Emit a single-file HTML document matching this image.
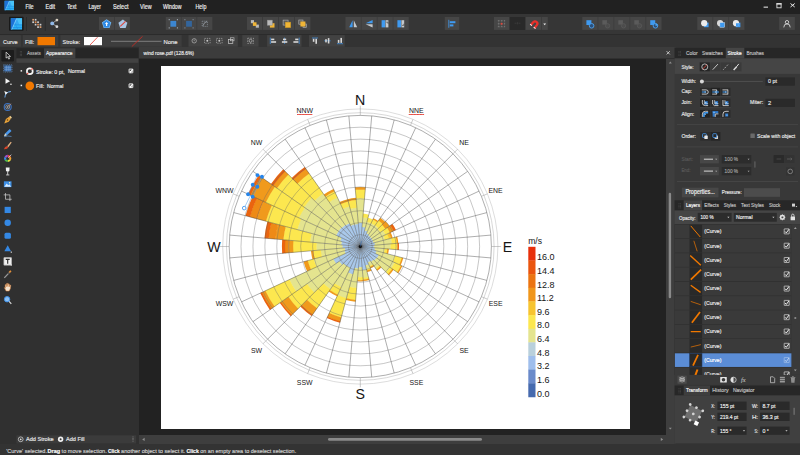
<!DOCTYPE html>
<html lang="en"><head><meta charset="utf-8">
<title>wind rose.pdf - Affinity Designer</title>
<style>
*{box-sizing:border-box;margin:0;padding:0}
html,body{width:800px;height:455px;overflow:hidden;background:#2f2f2f}
body{position:relative;font-family:"Liberation Sans",Arial,sans-serif;color:#d8d8d8;font-size:6.6px;line-height:1}
.a{position:absolute}
.t{position:absolute;white-space:nowrap;color:#dcdcdc}
svg.chart{position:absolute;left:0;top:0}
svg.ui{position:absolute;left:0;top:0;pointer-events:none}
</style></head><body>
<div class="a" style="left:0px;top:0px;width:800px;height:13.7px;background:#212121;"></div>
<div class="a" style="left:0px;top:13.7px;width:800px;height:20.3px;background:#363636;"></div>
<div class="a" style="left:0px;top:33.5px;width:800px;height:14.7px;background:#2b2b2b;"></div>
<div class="a" style="left:0px;top:34.8px;width:800px;height:12.3px;background:#333333;"></div>
<div class="a" style="left:0px;top:47.3px;width:800px;height:396.5px;background:#303030;"></div>
<div class="a" style="left:0px;top:443.7px;width:800px;height:11.3px;background:#333333;"></div>
<div class="a" style="left:138.5px;top:47.3px;width:537px;height:11.2px;background:#3c3c3c;"></div>
<div class="a" style="left:138.5px;top:58.5px;width:527.2px;height:377px;background:#222222;"></div>
<div class="a" style="left:161px;top:66px;width:469px;height:363px;background:#ffffff;"></div>
<div class="a" style="left:665.7px;top:58.5px;width:9.6px;height:377px;background:#3e3e3e;"></div>
<div class="a" style="left:138.5px;top:435.4px;width:537px;height:8.3px;background:#3e3e3e;"></div>
<svg class="chart" width="800" height="455" viewBox="0 0 800 455">
<g shape-rendering="geometricPrecision">
<path d="M360.30 246.50L358.19 222.59A24.00 24.00 0 0 1 362.41 222.59Z" fill="#a9c8ea"/>
<path d="M356.05 198.39A48.30 48.30 0 0 1 364.55 198.39L362.38 222.94A23.65 23.65 0 0 0 358.22 222.94Z" fill="#e4e48f"/>
<path d="M355.26 189.52A57.20 57.20 0 0 1 365.34 189.52L364.52 198.74A47.95 47.95 0 0 0 356.08 198.74Z" fill="#fce74f"/>
<path d="M355.07 187.33A59.40 59.40 0 0 1 365.53 187.33L365.30 189.87A56.85 56.85 0 0 0 355.30 189.87Z" fill="#f09a1c"/>
<path d="M360.30 246.50L362.03 226.57A20.00 20.00 0 0 1 365.49 227.19Z" fill="#a9c8ea"/>
<path d="M362.85 217.11A29.50 29.50 0 0 1 367.96 218.01L365.40 227.52A19.65 19.65 0 0 0 362.00 226.92Z" fill="#e4e48f"/>
<path d="M363.15 213.62A33.00 33.00 0 0 1 368.87 214.63L367.87 218.35A29.15 29.15 0 0 0 362.82 217.46Z" fill="#fce74f"/>
<path d="M360.30 246.50L364.69 230.08A17.00 17.00 0 0 1 367.50 231.10Z" fill="#a9c8ea"/>
<path d="M367.01 221.38A26.00 26.00 0 0 1 371.31 222.95L367.35 231.42A16.65 16.65 0 0 0 364.60 230.41Z" fill="#e4e48f"/>
<path d="M367.96 217.81A29.70 29.70 0 0 1 372.88 219.59L371.16 223.26A25.65 25.65 0 0 0 366.92 221.72Z" fill="#fce74f"/>
<path d="M360.30 246.50L366.63 232.90A15.00 15.00 0 0 1 368.91 234.22Z" fill="#a9c8ea"/>
<path d="M371.27 222.93A26.00 26.00 0 0 1 375.23 225.22L368.71 234.51A14.65 14.65 0 0 0 366.48 233.22Z" fill="#e4e48f"/>
<path d="M372.95 219.30A30.00 30.00 0 0 1 377.53 221.94L375.03 225.50A25.65 25.65 0 0 0 371.12 223.24Z" fill="#fce74f"/>
<path d="M373.46 218.21A31.20 31.20 0 0 1 378.22 220.96L377.33 222.23A29.65 29.65 0 0 0 372.81 219.62Z" fill="#f09a1c"/>
<path d="M360.30 246.50L368.32 235.02A14.00 14.00 0 0 1 370.21 236.61Z" fill="#a9c8ea"/>
<path d="M375.19 225.19A26.00 26.00 0 0 1 378.70 228.13L369.96 236.86A13.65 13.65 0 0 0 368.12 235.31Z" fill="#e4e48f"/>
<path d="M378.63 220.27A32.00 32.00 0 0 1 382.95 223.89L378.45 228.38A25.65 25.65 0 0 0 374.99 225.48Z" fill="#fce74f"/>
<path d="M380.35 217.81A35.00 35.00 0 0 1 385.07 221.77L382.70 224.14A31.65 31.65 0 0 0 378.43 220.56Z" fill="#f09a1c"/>
<path d="M360.30 246.50L370.19 236.59A14.00 14.00 0 0 1 371.78 238.48Z" fill="#a9c8ea"/>
<path d="M377.96 228.81A25.00 25.00 0 0 1 380.79 232.18L371.49 238.68A13.65 13.65 0 0 0 369.94 236.84Z" fill="#e4e48f"/>
<path d="M382.20 224.56A31.00 31.00 0 0 1 385.71 228.74L380.50 232.38A24.65 24.65 0 0 0 377.71 229.05Z" fill="#fce74f"/>
<path d="M385.45 221.31A35.60 35.60 0 0 1 389.48 226.11L385.42 228.94A30.65 30.65 0 0 0 381.95 224.81Z" fill="#f09a1c"/>
<path d="M360.30 246.50L371.76 238.46A14.00 14.00 0 0 1 372.99 240.59Z" fill="#a9c8ea"/>
<path d="M383.22 230.42A28.00 28.00 0 0 1 385.69 234.69L372.68 240.74A13.65 13.65 0 0 0 371.47 238.66Z" fill="#e4e48f"/>
<path d="M387.32 227.55A33.00 33.00 0 0 1 390.22 232.58L385.37 234.84A27.65 27.65 0 0 0 382.94 230.62Z" fill="#fce74f"/>
<path d="M390.59 225.25A37.00 37.00 0 0 1 393.85 230.89L389.90 232.73A32.65 32.65 0 0 0 387.03 227.75Z" fill="#f09a1c"/>
<path d="M392.47 223.93A39.30 39.30 0 0 1 395.93 229.92L393.53 231.04A36.65 36.65 0 0 0 390.30 225.45Z" fill="#ea640f"/>
<path d="M360.30 246.50L372.98 240.57A14.00 14.00 0 0 1 373.83 242.89Z" fill="#a9c8ea"/>
<path d="M383.85 235.49A26.00 26.00 0 0 1 385.42 239.79L373.49 242.98A13.65 13.65 0 0 0 372.67 240.72Z" fill="#e4e48f"/>
<path d="M387.48 233.80A30.00 30.00 0 0 1 389.28 238.76L385.08 239.88A25.65 25.65 0 0 0 383.54 235.64Z" fill="#fce74f"/>
<path d="M389.29 232.95A32.00 32.00 0 0 1 391.22 238.24L388.95 238.85A29.65 29.65 0 0 0 387.16 233.95Z" fill="#f7c42f"/>
<path d="M390.65 232.32A33.50 33.50 0 0 1 392.67 237.86L390.88 238.34A31.65 31.65 0 0 0 388.97 233.10Z" fill="#f09a1c"/>
<path d="M360.30 246.50L374.79 242.61A15.00 15.00 0 0 1 375.24 245.21Z" fill="#a9c8ea"/>
<path d="M391.20 238.19A32.00 32.00 0 0 1 392.18 243.74L374.90 245.24A14.65 14.65 0 0 0 374.45 242.70Z" fill="#e4e48f"/>
<path d="M396.03 236.89A37.00 37.00 0 0 1 397.16 243.31L391.83 243.77A31.65 31.65 0 0 0 390.86 238.28Z" fill="#fce74f"/>
<path d="M397.19 236.58A38.20 38.20 0 0 1 398.36 243.20L396.81 243.34A36.65 36.65 0 0 0 395.69 236.98Z" fill="#f09a1c"/>
<path d="M360.30 246.50L374.25 245.27A14.00 14.00 0 0 1 374.25 247.73Z" fill="#a9c8ea"/>
<path d="M390.78 243.81A30.60 30.60 0 0 1 390.78 249.19L373.90 247.70A13.65 13.65 0 0 0 373.90 245.30Z" fill="#e4e48f"/>
<path d="M397.65 243.20A37.50 37.50 0 0 1 397.65 249.80L390.43 249.16A30.25 30.25 0 0 0 390.43 243.84Z" fill="#fce74f"/>
<path d="M398.85 243.09A38.70 38.70 0 0 1 398.85 249.91L397.31 249.77A37.15 37.15 0 0 0 397.31 243.23Z" fill="#ea640f"/>
<path d="M360.30 246.50L375.24 247.79A15.00 15.00 0 0 1 374.79 250.39Z" fill="#a9c8ea"/>
<path d="M385.01 248.64A24.80 24.80 0 0 1 384.25 252.94L374.45 250.30A14.65 14.65 0 0 0 374.90 247.76Z" fill="#e4e48f"/>
<path d="M387.70 248.87A27.50 27.50 0 0 1 386.86 253.64L383.91 252.85A24.45 24.45 0 0 0 384.66 248.61Z" fill="#fce74f"/>
<path d="M388.89 248.98A28.70 28.70 0 0 1 388.02 253.95L386.52 253.55A27.15 27.15 0 0 0 387.35 248.84Z" fill="#f09a1c"/>
<path d="M360.30 246.50L376.72 250.89A17.00 17.00 0 0 1 375.70 253.70Z" fill="#a9c8ea"/>
<path d="M395.47 255.89A36.40 36.40 0 0 1 393.28 261.91L375.38 253.55A16.65 16.65 0 0 0 376.39 250.80Z" fill="#e4e48f"/>
<path d="M402.13 257.67A43.30 43.30 0 0 1 399.53 264.83L392.96 261.76A36.05 36.05 0 0 0 395.13 255.80Z" fill="#fce74f"/>
<path d="M403.29 257.98A44.50 44.50 0 0 1 400.61 265.34L399.21 264.69A42.95 42.95 0 0 0 401.80 257.58Z" fill="#f09a1c"/>
<path d="M360.30 246.50L379.07 255.23A20.70 20.70 0 0 1 377.25 258.39Z" fill="#a9c8ea"/>
<path d="M394.94 262.61A38.20 38.20 0 0 1 391.57 268.44L376.96 258.19A20.35 20.35 0 0 0 378.75 255.08Z" fill="#e4e48f"/>
<path d="M401.28 265.57A45.20 45.20 0 0 1 397.30 272.46L391.29 268.24A37.85 37.85 0 0 0 394.62 262.47Z" fill="#fce74f"/>
<path d="M402.37 266.07A46.40 46.40 0 0 1 398.29 273.15L397.02 272.26A44.85 44.85 0 0 0 400.96 265.42Z" fill="#f09a1c"/>
<path d="M360.30 246.50L376.69 257.96A20.00 20.00 0 0 1 374.43 260.65Z" fill="#a9c8ea"/>
<path d="M390.38 267.52A36.70 36.70 0 0 1 386.23 272.47L374.18 260.41A19.65 19.65 0 0 0 376.41 257.76Z" fill="#e4e48f"/>
<path d="M392.59 269.07A39.40 39.40 0 0 1 388.14 274.38L385.98 272.23A36.35 36.35 0 0 0 390.09 267.32Z" fill="#fce74f"/>
<path d="M393.58 269.76A40.60 40.60 0 0 1 388.98 275.23L387.89 274.14A39.05 39.05 0 0 0 392.31 268.87Z" fill="#f09a1c"/>
<path d="M360.30 246.50L373.75 259.92A19.00 19.00 0 0 1 371.18 262.07Z" fill="#a9c8ea"/>
<path d="M379.41 265.58A27.00 27.00 0 0 1 375.77 268.63L370.98 261.79A18.65 18.65 0 0 0 373.50 259.68Z" fill="#e4e48f"/>
<path d="M380.40 266.56A28.40 28.40 0 0 1 376.57 269.78L375.57 268.34A26.65 26.65 0 0 0 379.16 265.33Z" fill="#fce74f"/>
<path d="M381.25 267.41A29.60 29.60 0 0 1 377.26 270.76L376.37 269.49A28.05 28.05 0 0 0 380.15 266.32Z" fill="#f09a1c"/>
<path d="M360.30 246.50L370.64 261.24A18.00 18.00 0 0 1 367.89 262.82Z" fill="#a9c8ea"/>
<path d="M372.93 264.51A22.00 22.00 0 0 1 369.58 266.45L367.75 262.50A17.65 17.65 0 0 0 370.44 260.95Z" fill="#e4e48f"/>
<path d="M373.51 265.33A23.00 23.00 0 0 1 370.00 267.35L369.43 266.13A21.65 21.65 0 0 0 372.73 264.22Z" fill="#fce74f"/>
<path d="M374.08 266.15A24.00 24.00 0 0 1 370.42 268.26L369.85 267.04A22.65 22.65 0 0 0 373.31 265.04Z" fill="#f09a1c"/>
<path d="M360.30 246.50L368.77 264.62A20.00 20.00 0 0 1 365.46 265.82Z" fill="#a9c8ea"/>
<path d="M370.46 268.24A24.00 24.00 0 0 1 366.49 269.69L365.37 265.48A19.65 19.65 0 0 0 368.62 264.30Z" fill="#e4e48f"/>
<path d="M371.01 269.42A25.30 25.30 0 0 1 366.83 270.94L366.40 269.35A23.65 23.65 0 0 0 370.31 267.93Z" fill="#fce74f"/>
<path d="M371.52 270.51A26.50 26.50 0 0 1 367.14 272.10L366.74 270.61A24.95 24.95 0 0 0 370.86 269.10Z" fill="#f09a1c"/>
<path d="M360.30 246.50L366.53 269.68A24.00 24.00 0 0 1 362.37 270.41Z" fill="#a9c8ea"/>
<path d="M368.61 277.40A32.00 32.00 0 0 1 363.06 278.38L362.34 270.06A23.65 23.65 0 0 0 366.44 269.34Z" fill="#e4e48f"/>
<path d="M368.97 278.75A33.40 33.40 0 0 1 363.18 279.78L363.03 278.03A31.65 31.65 0 0 0 368.52 277.06Z" fill="#fce74f"/>
<path d="M369.28 279.91A34.60 34.60 0 0 1 363.29 280.97L363.15 279.43A33.05 33.05 0 0 0 368.88 278.42Z" fill="#f09a1c"/>
<path d="M360.30 246.50L362.15 267.42A21.00 21.00 0 0 1 358.45 267.42Z" fill="#a9c8ea"/>
<path d="M363.03 277.38A31.00 31.00 0 0 1 357.57 277.38L358.48 267.07A20.65 20.65 0 0 0 362.12 267.07Z" fill="#e4e48f"/>
<path d="M363.29 280.37A34.00 34.00 0 0 1 357.31 280.37L357.60 277.03A30.65 30.65 0 0 0 363.00 277.03Z" fill="#fce74f"/>
<path d="M363.38 281.36A35.00 35.00 0 0 1 357.22 281.36L357.34 280.02A33.65 33.65 0 0 0 363.26 280.02Z" fill="#f09a1c"/>
<path d="M360.30 246.50L358.37 268.82A22.40 22.40 0 0 1 354.48 268.13Z" fill="#a9c8ea"/>
<path d="M356.68 288.34A42.00 42.00 0 0 1 349.39 287.06L354.57 267.79A22.05 22.05 0 0 0 358.40 268.47Z" fill="#e4e48f"/>
<path d="M355.64 300.30A54.00 54.00 0 0 1 346.28 298.65L349.49 286.72A41.65 41.65 0 0 0 356.71 287.99Z" fill="#fce74f"/>
<path d="M355.51 301.79A55.50 55.50 0 0 1 345.89 300.10L346.37 298.31A53.65 53.65 0 0 0 355.67 299.95Z" fill="#f09a1c"/>
<path d="M360.30 246.50L352.82 274.52A29.00 29.00 0 0 1 348.02 272.77Z" fill="#a9c8ea"/>
<path d="M346.37 298.67A54.00 54.00 0 0 1 337.44 295.42L348.17 272.46A28.65 28.65 0 0 0 352.91 274.18Z" fill="#e4e48f"/>
<path d="M341.26 317.80A73.80 73.80 0 0 1 329.05 313.36L337.58 295.10A53.65 53.65 0 0 0 346.46 298.33Z" fill="#fce74f"/>
<path d="M340.23 321.67A77.80 77.80 0 0 1 327.36 316.98L329.20 313.04A73.45 73.45 0 0 0 341.35 317.46Z" fill="#f09a1c"/>
<path d="M339.95 322.73A78.90 78.90 0 0 1 326.89 317.98L327.51 316.66A77.45 77.45 0 0 0 340.32 321.33Z" fill="#ea640f"/>
<path d="M360.30 246.50L350.18 268.26A24.00 24.00 0 0 1 346.52 266.15Z" fill="#a9c8ea"/>
<path d="M341.19 287.57A45.30 45.30 0 0 1 334.28 283.58L346.72 265.86A23.65 23.65 0 0 0 350.32 267.94Z" fill="#e4e48f"/>
<path d="M337.73 295.01A53.50 53.50 0 0 1 329.58 290.30L334.49 283.30A44.95 44.95 0 0 0 341.34 287.26Z" fill="#fce74f"/>
<path d="M337.10 296.37A55.00 55.00 0 0 1 328.71 291.53L329.78 290.01A53.15 53.15 0 0 0 337.88 294.69Z" fill="#f09a1c"/>
<path d="M360.30 246.50L346.55 266.17A24.00 24.00 0 0 1 343.31 263.46Z" fill="#a9c8ea"/>
<path d="M330.22 289.53A52.50 52.50 0 0 1 323.14 283.59L343.56 263.21A23.65 23.65 0 0 0 346.75 265.88Z" fill="#e4e48f"/>
<path d="M316.88 308.63A75.80 75.80 0 0 1 306.65 300.05L323.39 283.34A52.15 52.15 0 0 0 330.43 289.24Z" fill="#fce74f"/>
<path d="M312.41 315.02A83.60 83.60 0 0 1 301.13 305.56L306.90 299.80A75.45 75.45 0 0 0 317.08 308.34Z" fill="#f09a1c"/>
<path d="M311.72 316.01A84.80 84.80 0 0 1 300.29 306.41L301.38 305.32A83.25 83.25 0 0 0 312.61 314.74Z" fill="#ea640f"/>
<path d="M360.30 246.50L341.93 264.90A26.00 26.00 0 0 1 338.99 261.39Z" fill="#a9c8ea"/>
<path d="M314.02 292.86A65.50 65.50 0 0 1 306.61 284.02L339.28 261.19A25.65 25.65 0 0 0 342.18 264.65Z" fill="#e4e48f"/>
<path d="M297.99 308.92A88.20 88.20 0 0 1 288.01 297.03L306.90 283.82A65.15 65.15 0 0 0 314.27 292.61Z" fill="#fce74f"/>
<path d="M291.63 315.29A97.20 97.20 0 0 1 280.63 302.18L288.29 296.83A87.85 87.85 0 0 0 298.23 308.67Z" fill="#f09a1c"/>
<path d="M290.78 316.14A98.40 98.40 0 0 1 279.65 302.87L280.92 301.98A96.85 96.85 0 0 0 291.88 315.04Z" fill="#ea640f"/>
<path d="M360.30 246.50L335.74 263.73A30.00 30.00 0 0 1 333.10 259.15Z" fill="#a9c8ea"/>
<path d="M296.04 291.58A78.50 78.50 0 0 1 289.13 279.61L333.42 259.01A29.65 29.65 0 0 0 336.03 263.53Z" fill="#e4e48f"/>
<path d="M274.34 306.80A105.00 105.00 0 0 1 265.10 290.79L289.44 279.47A78.15 78.15 0 0 0 296.32 291.38Z" fill="#fce74f"/>
<path d="M271.23 308.98A108.80 108.80 0 0 1 261.65 292.39L265.42 290.64A104.65 104.65 0 0 0 274.63 306.60Z" fill="#f09a1c"/>
<path d="M269.92 309.90A110.40 110.40 0 0 1 260.20 293.07L261.97 292.25A108.45 108.45 0 0 0 271.52 308.78Z" fill="#ea640f"/>
<path d="M360.30 246.50L345.26 253.53A16.60 16.60 0 0 1 344.26 250.78Z" fill="#a9c8ea"/>
<path d="M316.36 267.04A48.50 48.50 0 0 1 313.44 259.01L344.60 250.69A16.25 16.25 0 0 0 345.58 253.38Z" fill="#e4e48f"/>
<path d="M310.65 269.70A54.80 54.80 0 0 1 307.35 260.64L313.78 258.92A48.15 48.15 0 0 0 316.68 266.89Z" fill="#fce74f"/>
<path d="M307.12 271.35A58.70 58.70 0 0 1 303.59 261.64L307.69 260.55A54.45 54.45 0 0 0 310.97 269.55Z" fill="#f09a1c"/>
<path d="M360.30 246.50L344.95 250.63A15.90 15.90 0 0 1 344.46 247.87Z" fill="#a9c8ea"/>
<path d="M321.67 256.89A40.00 40.00 0 0 1 320.45 249.95L344.81 247.84A15.55 15.55 0 0 0 345.28 250.54Z" fill="#e4e48f"/>
<path d="M314.43 258.83A47.50 47.50 0 0 1 312.98 250.60L320.80 249.92A39.65 39.65 0 0 0 322.01 256.80Z" fill="#fce74f"/>
<path d="M312.50 259.35A49.50 49.50 0 0 1 310.98 250.77L313.33 250.57A47.15 47.15 0 0 0 314.77 258.74Z" fill="#f09a1c"/>
<path d="M360.30 246.50L342.17 248.10A18.20 18.20 0 0 1 342.17 244.90Z" fill="#a9c8ea"/>
<path d="M316.47 250.37A44.00 44.00 0 0 1 316.47 242.63L342.52 244.93A17.85 17.85 0 0 0 342.52 248.07Z" fill="#e4e48f"/>
<path d="M293.06 252.44A67.50 67.50 0 0 1 293.06 240.56L316.82 242.66A43.65 43.65 0 0 0 316.82 250.34Z" fill="#fce74f"/>
<path d="M288.58 252.84A72.00 72.00 0 0 1 288.58 240.16L293.41 240.59A67.15 67.15 0 0 0 293.41 252.41Z" fill="#f09a1c"/>
<path d="M284.99 253.15A75.60 75.60 0 0 1 284.99 239.85L288.93 240.19A71.65 71.65 0 0 0 288.93 252.81Z" fill="#ee8a16"/>
<path d="M282.20 253.40A78.40 78.40 0 0 1 282.20 239.60L285.34 239.88A75.25 75.25 0 0 0 285.34 253.12Z" fill="#ea640f"/>
<path d="M360.30 246.50L340.97 244.83A19.40 19.40 0 0 1 341.57 241.46Z" fill="#a9c8ea"/>
<path d="M309.89 242.13A50.60 50.60 0 0 1 311.44 233.36L341.90 241.55A19.05 19.05 0 0 0 341.32 244.86Z" fill="#e4e48f"/>
<path d="M283.09 239.81A77.50 77.50 0 0 1 285.46 226.38L311.77 233.45A50.25 50.25 0 0 0 310.24 242.16Z" fill="#fce74f"/>
<path d="M275.12 239.12A85.50 85.50 0 0 1 277.73 224.30L285.80 226.47A77.15 77.15 0 0 0 283.44 239.84Z" fill="#f09a1c"/>
<path d="M268.34 238.54A92.30 92.30 0 0 1 271.17 222.53L278.07 224.39A85.15 85.15 0 0 0 275.47 239.15Z" fill="#ee8a16"/>
<path d="M264.46 238.20A96.20 96.20 0 0 1 267.40 221.52L271.50 222.62A91.95 91.95 0 0 0 268.69 238.57Z" fill="#ea640f"/>
<path d="M360.30 246.50L340.01 241.08A21.00 21.00 0 0 1 341.28 237.61Z" fill="#a9c8ea"/>
<path d="M297.02 229.60A65.50 65.50 0 0 1 300.96 218.77L341.59 237.76A20.65 20.65 0 0 0 340.35 241.17Z" fill="#e4e48f"/>
<path d="M265.62 221.22A98.00 98.00 0 0 1 271.52 205.01L301.28 218.91A65.15 65.15 0 0 0 297.36 229.69Z" fill="#fce74f"/>
<path d="M256.92 218.90A107.00 107.00 0 0 1 263.36 201.20L271.84 205.15A97.65 97.65 0 0 0 265.96 221.31Z" fill="#f09a1c"/>
<path d="M249.77 216.99A114.40 114.40 0 0 1 256.66 198.06L263.68 201.34A106.65 106.65 0 0 0 257.26 218.99Z" fill="#ee8a16"/>
<path d="M245.52 215.85A118.80 118.80 0 0 1 252.67 196.20L256.98 198.21A114.05 114.05 0 0 0 250.11 217.08Z" fill="#ea640f"/>
<path d="M360.30 246.50L336.00 235.20A26.80 26.80 0 0 1 338.36 231.11Z" fill="#a9c8ea"/>
<path d="M298.65 217.82A68.00 68.00 0 0 1 304.63 207.45L338.65 231.31A26.45 26.45 0 0 0 336.32 235.34Z" fill="#e4e48f"/>
<path d="M265.46 202.38A104.60 104.60 0 0 1 274.67 186.43L304.92 207.65A67.65 67.65 0 0 0 298.96 217.96Z" fill="#fce74f"/>
<path d="M250.23 195.29A121.40 121.40 0 0 1 260.92 176.78L274.96 186.63A104.25 104.25 0 0 0 265.78 202.52Z" fill="#f09a1c"/>
<path d="M247.87 194.19A124.00 124.00 0 0 1 258.79 175.29L261.20 176.98A121.05 121.05 0 0 0 250.55 195.44Z" fill="#ea640f"/>
<path d="M360.30 246.50L338.17 231.03A27.00 27.00 0 0 1 341.22 227.39Z" fill="#a9c8ea"/>
<path d="M303.74 206.97A69.00 69.00 0 0 1 311.55 197.67L341.47 227.64A26.65 26.65 0 0 0 338.46 231.23Z" fill="#e4e48f"/>
<path d="M276.70 188.07A102.00 102.00 0 0 1 288.24 174.31L311.80 197.91A68.65 68.65 0 0 0 304.03 207.17Z" fill="#fce74f"/>
<path d="M273.01 185.49A106.50 106.50 0 0 1 285.06 171.13L288.49 174.56A101.65 101.65 0 0 0 276.98 188.27Z" fill="#f09a1c"/>
<path d="M270.96 184.06A109.00 109.00 0 0 1 283.29 169.36L285.31 171.38A106.15 106.15 0 0 0 273.29 185.69Z" fill="#ea640f"/>
<path d="M360.30 246.50L341.55 227.78A26.50 26.50 0 0 1 345.12 224.78Z" fill="#a9c8ea"/>
<path d="M314.30 200.58A65.00 65.00 0 0 1 323.06 193.22L345.32 225.07A26.15 26.15 0 0 0 341.79 228.03Z" fill="#e4e48f"/>
<path d="M297.10 183.41A89.30 89.30 0 0 1 309.14 173.31L323.26 193.51A64.65 64.65 0 0 0 314.55 200.83Z" fill="#fce74f"/>
<path d="M293.07 179.38A95.00 95.00 0 0 1 305.88 168.63L309.34 173.59A88.95 88.95 0 0 0 297.35 183.66Z" fill="#f09a1c"/>
<path d="M291.72 178.04A96.90 96.90 0 0 1 304.79 167.08L306.08 168.92A94.65 94.65 0 0 0 293.31 179.63Z" fill="#ea640f"/>
<path d="M360.30 246.50L345.43 225.30A25.90 25.90 0 0 1 349.37 223.02Z" fill="#a9c8ea"/>
<path d="M329.00 201.88A54.50 54.50 0 0 1 337.31 197.09L349.52 223.33A25.55 25.55 0 0 0 345.63 225.58Z" fill="#e4e48f"/>
<path d="M325.15 196.40A61.20 61.20 0 0 1 334.48 191.01L337.46 197.40A54.15 54.15 0 0 0 329.20 202.17Z" fill="#fce74f"/>
<path d="M323.83 194.52A63.50 63.50 0 0 1 333.51 188.93L334.63 191.33A60.85 60.85 0 0 0 325.35 196.69Z" fill="#f09a1c"/>
<path d="M360.30 246.50L350.56 225.66A23.00 23.00 0 0 1 354.37 224.28Z" fill="#a9c8ea"/>
<path d="M342.60 208.63A41.80 41.80 0 0 1 349.52 206.11L354.46 224.62A22.65 22.65 0 0 0 350.71 225.98Z" fill="#e4e48f"/>
<path d="M340.40 203.92A47.00 47.00 0 0 1 348.18 201.09L349.61 206.45A41.45 41.45 0 0 0 342.75 208.95Z" fill="#fce74f"/>
<path d="M339.55 202.11A49.00 49.00 0 0 1 347.66 199.16L348.27 201.43A46.65 46.65 0 0 0 340.55 204.24Z" fill="#f09a1c"/>
<path d="M360.30 246.50L354.33 224.29A23.00 23.00 0 0 1 358.32 223.59Z" fill="#a9c8ea"/>
<path d="M350.12 208.64A39.20 39.20 0 0 1 356.92 207.45L358.35 223.93A22.65 22.65 0 0 0 354.42 224.63Z" fill="#e4e48f"/>
<path d="M348.12 201.21A46.90 46.90 0 0 1 356.25 199.77L356.95 207.79A38.85 38.85 0 0 0 350.21 208.98Z" fill="#fce74f"/>
<path d="M347.58 199.18A49.00 49.00 0 0 1 356.07 197.68L356.28 200.12A46.55 46.55 0 0 0 348.21 201.55Z" fill="#f09a1c"/>
</g>
<g fill="none" stroke="#666666" stroke-width="0.37">
<circle cx="360.3" cy="246.5" r="11.93"/>
<circle cx="360.3" cy="246.5" r="23.86"/>
<circle cx="360.3" cy="246.5" r="35.79"/>
<circle cx="360.3" cy="246.5" r="47.72"/>
<circle cx="360.3" cy="246.5" r="59.65"/>
<circle cx="360.3" cy="246.5" r="71.58"/>
<circle cx="360.3" cy="246.5" r="83.51"/>
<circle cx="360.3" cy="246.5" r="95.44"/>
<circle cx="360.3" cy="246.5" r="107.37"/>
<circle cx="360.3" cy="246.5" r="119.30"/>
</g>
<g stroke="#3c3c3c" stroke-width="0.42">
<line x1="360.3" y1="246.5" x2="371.73" y2="115.90"/>
<line x1="360.3" y1="246.5" x2="394.23" y2="119.87"/>
<line x1="360.3" y1="246.5" x2="415.71" y2="127.68"/>
<line x1="360.3" y1="246.5" x2="435.50" y2="139.11"/>
<line x1="360.3" y1="246.5" x2="453.00" y2="153.80"/>
<line x1="360.3" y1="246.5" x2="467.69" y2="171.30"/>
<line x1="360.3" y1="246.5" x2="479.12" y2="191.09"/>
<line x1="360.3" y1="246.5" x2="486.93" y2="212.57"/>
<line x1="360.3" y1="246.5" x2="490.90" y2="235.07"/>
<line x1="360.3" y1="246.5" x2="490.90" y2="257.93"/>
<line x1="360.3" y1="246.5" x2="486.93" y2="280.43"/>
<line x1="360.3" y1="246.5" x2="479.12" y2="301.91"/>
<line x1="360.3" y1="246.5" x2="467.69" y2="321.70"/>
<line x1="360.3" y1="246.5" x2="453.00" y2="339.20"/>
<line x1="360.3" y1="246.5" x2="435.50" y2="353.89"/>
<line x1="360.3" y1="246.5" x2="415.71" y2="365.32"/>
<line x1="360.3" y1="246.5" x2="394.23" y2="373.13"/>
<line x1="360.3" y1="246.5" x2="371.73" y2="377.10"/>
<line x1="360.3" y1="246.5" x2="348.87" y2="377.10"/>
<line x1="360.3" y1="246.5" x2="326.37" y2="373.13"/>
<line x1="360.3" y1="246.5" x2="304.89" y2="365.32"/>
<line x1="360.3" y1="246.5" x2="285.10" y2="353.89"/>
<line x1="360.3" y1="246.5" x2="267.60" y2="339.20"/>
<line x1="360.3" y1="246.5" x2="252.91" y2="321.70"/>
<line x1="360.3" y1="246.5" x2="241.48" y2="301.91"/>
<line x1="360.3" y1="246.5" x2="233.67" y2="280.43"/>
<line x1="360.3" y1="246.5" x2="229.70" y2="257.93"/>
<line x1="360.3" y1="246.5" x2="229.70" y2="235.07"/>
<line x1="360.3" y1="246.5" x2="233.67" y2="212.57"/>
<line x1="360.3" y1="246.5" x2="241.48" y2="191.09"/>
<line x1="360.3" y1="246.5" x2="252.91" y2="171.30"/>
<line x1="360.3" y1="246.5" x2="267.60" y2="153.80"/>
<line x1="360.3" y1="246.5" x2="285.10" y2="139.11"/>
<line x1="360.3" y1="246.5" x2="304.89" y2="127.68"/>
<line x1="360.3" y1="246.5" x2="326.37" y2="119.87"/>
<line x1="360.3" y1="246.5" x2="348.87" y2="115.90"/>
</g>
<circle cx="360.3" cy="246.5" r="131.1" fill="none" stroke="#777" stroke-width="0.6"/>
<circle cx="360.3" cy="246.5" r="133.8" fill="none" stroke="#a8a8a8" stroke-width="0.45"/>
<circle cx="360.3" cy="246.5" r="137.6" fill="none" stroke="#b4b4b4" stroke-width="0.45"/>
<g stroke="#8a8a8a" stroke-width="0.45">
<line x1="360.30" y1="115.40" x2="360.30" y2="105.70"/>
<line x1="410.47" y1="125.38" x2="412.96" y2="119.37"/>
<line x1="453.00" y1="153.80" x2="457.60" y2="149.20"/>
<line x1="481.42" y1="196.33" x2="487.43" y2="193.84"/>
<line x1="491.40" y1="246.50" x2="501.10" y2="246.50"/>
<line x1="481.42" y1="296.67" x2="487.43" y2="299.16"/>
<line x1="453.00" y1="339.20" x2="457.60" y2="343.80"/>
<line x1="410.47" y1="367.62" x2="412.96" y2="373.63"/>
<line x1="360.30" y1="377.60" x2="360.30" y2="387.30"/>
<line x1="310.13" y1="367.62" x2="307.64" y2="373.63"/>
<line x1="267.60" y1="339.20" x2="263.00" y2="343.80"/>
<line x1="239.18" y1="296.67" x2="233.17" y2="299.16"/>
<line x1="229.20" y1="246.50" x2="219.50" y2="246.50"/>
<line x1="239.18" y1="196.33" x2="233.17" y2="193.84"/>
<line x1="267.60" y1="153.80" x2="263.00" y2="149.20"/>
<line x1="310.13" y1="125.38" x2="307.64" y2="119.37"/>
</g>
<circle cx="360.3" cy="246.5" r="1.5" fill="#0c0c0c"/>
<line x1="360.3" y1="246.5" x2="361.5" y2="241.0" stroke="#2f6fc0" stroke-width="0.5"/>
<g font-family="'Liberation Sans', Arial, sans-serif" fill="#161616" text-anchor="middle">
<text x="360.2" y="104.8" font-size="14.2">N</text>
<text x="360.2" y="398.8" font-size="14.2">S</text>
<text x="213.9" y="251.6" font-size="14.2">W</text>
<text x="507.4" y="251.6" font-size="14.2">E</text>
<text x="416.4" y="113.4" font-size="6.9">NNE</text>
<text x="464" y="145.0" font-size="6.9">NE</text>
<text x="495.6" y="193.2" font-size="6.9">ENE</text>
<text x="495.6" y="305.6" font-size="6.9">ESE</text>
<text x="464" y="353.1" font-size="6.9">SE</text>
<text x="416.4" y="384.7" font-size="6.9">SSE</text>
<text x="304.7" y="384.7" font-size="6.9">SSW</text>
<text x="256.5" y="353.1" font-size="6.9">SW</text>
<text x="224.5" y="305.6" font-size="6.9">WSW</text>
<text x="224.5" y="193.2" font-size="6.9">WNW</text>
<text x="256.5" y="145.0" font-size="6.9">NW</text>
<text x="304.7" y="113.4" font-size="6.9">NNW</text>
</g>
<path d="M297.1 114.0l0.76 0.9l0.76 -0.9l0.76 0.9l0.76 -0.9l0.76 0.9l0.76 -0.9l0.76 0.9l0.76 -0.9l0.76 0.9l0.76 -0.9l0.76 0.9l0.76 -0.9l0.76 0.9l0.76 -0.9l0.76 0.9l0.76 -0.9l0.76 0.9l0.76 -0.9l0.76 0.9l0.76 -0.9" fill="none" stroke="#e0342a" stroke-width="0.95"/>
<path d="M408.8 114.0l0.76 0.9l0.76 -0.9l0.76 0.9l0.76 -0.9l0.76 0.9l0.76 -0.9l0.76 0.9l0.76 -0.9l0.76 0.9l0.76 -0.9l0.76 0.9l0.76 -0.9l0.76 0.9l0.76 -0.9l0.76 0.9l0.76 -0.9l0.76 0.9l0.76 -0.9l0.76 0.9l0.76 -0.9" fill="none" stroke="#e0342a" stroke-width="0.95"/>
<rect x="528.3" y="246.80" width="7.2" height="13.95" fill="#e8300a"/>
<rect x="528.3" y="260.45" width="7.2" height="13.95" fill="#ea540e"/>
<rect x="528.3" y="274.10" width="7.2" height="13.95" fill="#ec7410"/>
<rect x="528.3" y="287.75" width="7.2" height="13.95" fill="#f0961a"/>
<rect x="528.3" y="301.40" width="7.2" height="13.95" fill="#f7c42f"/>
<rect x="528.3" y="315.05" width="7.2" height="13.95" fill="#fce74f"/>
<rect x="528.3" y="328.70" width="7.2" height="13.95" fill="#e4e48f"/>
<rect x="528.3" y="342.35" width="7.2" height="13.95" fill="#b9d0dc"/>
<rect x="528.3" y="356.00" width="7.2" height="13.95" fill="#9fbeec"/>
<rect x="528.3" y="369.65" width="7.2" height="13.95" fill="#6a8aca"/>
<rect x="528.3" y="383.30" width="7.2" height="13.95" fill="#466aae"/>
<g font-family="'Liberation Sans', Arial, sans-serif" fill="#161616" font-size="9">
<text x="528.2" y="243.6" font-size="8.6">m/s</text>
<text x="536.9" y="260.20">16.0</text>
<text x="536.9" y="273.85">14.4</text>
<text x="536.9" y="287.50">12.8</text>
<text x="536.9" y="301.15">11.2</text>
<text x="536.9" y="314.80">9.6</text>
<text x="536.9" y="328.45">8.0</text>
<text x="536.9" y="342.10">6.4</text>
<text x="536.9" y="355.75">4.8</text>
<text x="536.9" y="369.40">3.2</text>
<text x="536.9" y="383.05">1.6</text>
<text x="536.9" y="396.70">0.0</text>
</g>
<path d="M257.40 175.10L262.00 176.70L252.70 196.80L248.10 194.30Z" fill="none" stroke="#6f9fd8" stroke-width="0.5"/>
<path d="M260.6 177.4L251.6 195.4" fill="none" stroke="#7a7a7a" stroke-width="0.7"/>
<line x1="250.40" y1="195.55" x2="244.2" y2="208.1" stroke="#4f9be8" stroke-width="0.5"/>
<circle cx="257.40" cy="175.10" r="1.95" fill="#2585ea"/>
<circle cx="262.00" cy="176.70" r="1.95" fill="#2585ea"/>
<circle cx="257.35" cy="186.75" r="1.95" fill="#2585ea"/>
<circle cx="252.70" cy="196.80" r="1.95" fill="#2585ea"/>
<circle cx="248.10" cy="194.30" r="1.95" fill="#2585ea"/>
<circle cx="252.75" cy="184.70" r="1.95" fill="#2585ea"/>
<circle cx="244.2" cy="208.1" r="1.8" fill="#ffffff" stroke="#2f8cec" stroke-width="0.8"/>
</svg>
<svg class="ui" width="800" height="455" viewBox="0 0 800 455" font-family="'Liberation Sans', Arial, sans-serif">
<g transform="translate(4.60 0.80) scale(0.9400)"><rect x="0" y="0" width="10" height="10" fill="#2eb2f4"/><path d="M0 0L5.1 0L0.9 10L0 10Z" fill="#1c72d6"/><path d="M5.1 0L10 0L10 5.6L7.4 5.6Z" fill="#49c2f8"/><path d="M3.6 3.6L5.1 0L7.4 5.6L2.8 5.6Z" fill="#3aa4f0" opacity="0.75"/><path d="M5.1 0.2L0.9 10" stroke="#a8e4ff" stroke-width="0.55" fill="none"/><path d="M2.7 5.8L10 5.8M1.7 8.2L10 8.2" stroke="#1b86e2" stroke-width="0.5" fill="none"/><path d="M3.5 4L6.4 10" stroke="#1b86e2" stroke-width="0.45" fill="none" opacity="0.8"/></g>
<text x="25.50" y="8.90" font-size="6.8" fill="#f2f2f2" stroke="#f2f2f2" stroke-width="0.16" textLength="8.10" lengthAdjust="spacingAndGlyphs">File</text>
<text x="45.50" y="8.90" font-size="6.8" fill="#f2f2f2" stroke="#f2f2f2" stroke-width="0.16" textLength="9.50" lengthAdjust="spacingAndGlyphs">Edit</text>
<text x="67.00" y="8.90" font-size="6.8" fill="#f2f2f2" stroke="#f2f2f2" stroke-width="0.16" textLength="9.50" lengthAdjust="spacingAndGlyphs">Text</text>
<text x="88.50" y="8.90" font-size="6.8" fill="#f2f2f2" stroke="#f2f2f2" stroke-width="0.16" textLength="12.50" lengthAdjust="spacingAndGlyphs">Layer</text>
<text x="113.00" y="8.90" font-size="6.8" fill="#f2f2f2" stroke="#f2f2f2" stroke-width="0.16" textLength="15.50" lengthAdjust="spacingAndGlyphs">Select</text>
<text x="140.00" y="8.90" font-size="6.8" fill="#f2f2f2" stroke="#f2f2f2" stroke-width="0.16" textLength="11.50" lengthAdjust="spacingAndGlyphs">View</text>
<text x="163.00" y="8.90" font-size="6.8" fill="#f2f2f2" stroke="#f2f2f2" stroke-width="0.16" textLength="18.50" lengthAdjust="spacingAndGlyphs">Window</text>
<text x="195.50" y="8.90" font-size="6.8" fill="#f2f2f2" stroke="#f2f2f2" stroke-width="0.16" textLength="11.00" lengthAdjust="spacingAndGlyphs">Help</text>
<rect x="763.60" y="6.60" width="4.40" height="1.10" fill="#e0e0e0"/>
<rect x="776.9" y="3.6" width="4.2" height="4.2" fill="none" stroke="#e0e0e0" stroke-width="0.9"/>
<rect x="776.50" y="3.20" width="5.00" height="1.40" fill="#e0e0e0"/>
<path d="M790.5 3.5L794.7 7.0M794.7 3.5L790.5 7.0" fill="none" stroke="#ececec" stroke-width="1.0" />
<rect x="9.00" y="16.80" width="14.60" height="13.90" fill="#191919" rx="0.8"/>
<g transform="translate(10.80 18.30) scale(1.1250)"><rect x="0" y="0" width="10" height="10" fill="#2eb2f4"/><path d="M0 0L5.1 0L0.9 10L0 10Z" fill="#1c72d6"/><path d="M5.1 0L10 0L10 5.6L7.4 5.6Z" fill="#49c2f8"/><path d="M3.6 3.6L5.1 0L7.4 5.6L2.8 5.6Z" fill="#3aa4f0" opacity="0.75"/><path d="M5.1 0.2L0.9 10" stroke="#a8e4ff" stroke-width="0.55" fill="none"/><path d="M2.7 5.8L10 5.8M1.7 8.2L10 8.2" stroke="#1b86e2" stroke-width="0.5" fill="none"/><path d="M3.5 4L6.4 10" stroke="#1b86e2" stroke-width="0.45" fill="none" opacity="0.8"/></g>
<line x1="26.50" y1="17.00" x2="26.50" y2="31.00" stroke="#262626" stroke-width="0.7" />
<line x1="45.30" y1="17.00" x2="45.30" y2="31.00" stroke="#262626" stroke-width="0.7" />
<rect x="32.30" y="18.90" width="1.70" height="1.70" fill="#e0a070"/>
<rect x="34.75" y="18.90" width="1.70" height="1.70" fill="#cfcfcf"/>
<rect x="32.30" y="21.35" width="1.70" height="1.70" fill="#cfcfcf"/>
<rect x="34.75" y="21.35" width="1.70" height="1.70" fill="#e08a50"/>
<rect x="37.20" y="21.35" width="1.70" height="1.70" fill="#cfcfcf"/>
<rect x="34.75" y="23.80" width="1.70" height="1.70" fill="#cfcfcf"/>
<rect x="37.20" y="23.80" width="1.70" height="1.70" fill="#e08a50"/>
<rect x="39.65" y="23.80" width="1.70" height="1.70" fill="#cfcfcf"/>
<rect x="37.20" y="26.25" width="1.70" height="1.70" fill="#cfcfcf"/>
<rect x="39.65" y="26.25" width="1.70" height="1.70" fill="#e0a070"/>
<line x1="52.20" y1="23.40" x2="56.80" y2="20.20" stroke="#bfbfbf" stroke-width="0.8" />
<line x1="52.20" y1="23.40" x2="56.80" y2="26.60" stroke="#bfbfbf" stroke-width="0.8" />
<circle cx="52.20" cy="23.40" r="1.90" fill="#8fb8e8"/>
<circle cx="56.90" cy="20.10" r="1.40" fill="#d8cfc0"/>
<circle cx="56.90" cy="26.70" r="1.40" fill="#d8d8d8"/>
<rect x="98.95" y="17.00" width="15.25" height="12.90" fill="#464646"/>
<rect x="114.70" y="17.00" width="15.25" height="12.90" fill="#464646"/>
<path d="M106.60 19.20L111.26 22.59L109.48 28.06L103.72 28.06L101.94 22.59Z" fill="#7cc0f8" />
<path d="M106.60 20.00L110.50 22.83L109.01 27.42L104.19 27.42L102.70 22.83Z" fill="#2f8ae6" />
<path d="M106.6 22.0L108.2 24.0L107.2 24.0L107.2 26.0L106.0 26.0L106.0 24.0L105.0 24.0Z" fill="#ffffff" />
<path d="M122.90 19.40L127.37 22.65L125.66 27.90L120.14 27.90L118.43 22.65Z" fill="#a9c6e6" />
<line x1="120.30" y1="26.40" x2="125.50" y2="21.40" stroke="#e0453a" stroke-width="1.1" />
<rect x="165.75" y="17.00" width="15.20" height="12.90" fill="#464646"/>
<rect x="181.45" y="17.00" width="15.20" height="12.90" fill="#464646"/>
<rect x="197.15" y="17.00" width="15.20" height="12.90" fill="#464646"/>
<rect x="170.40" y="20.90" width="5.80" height="5.80" fill="#3c86d0"/>
<rect x="168.70" y="19.20" width="1.00" height="1.00" fill="#b8c4d0"/>
<rect x="168.70" y="27.40" width="1.00" height="1.00" fill="#b8c4d0"/>
<rect x="176.90" y="19.20" width="1.00" height="1.00" fill="#b8c4d0"/>
<rect x="176.90" y="27.40" width="1.00" height="1.00" fill="#b8c4d0"/>
<rect x="186.10" y="20.90" width="5.80" height="5.80" fill="#33659c"/>
<rect x="184.40" y="19.20" width="1.00" height="1.00" fill="#8d9aa8"/>
<rect x="184.40" y="27.40" width="1.00" height="1.00" fill="#8d9aa8"/>
<rect x="192.60" y="19.20" width="1.00" height="1.00" fill="#8d9aa8"/>
<rect x="192.60" y="27.40" width="1.00" height="1.00" fill="#8d9aa8"/>
<rect x="202.2" y="21.2" width="5.2" height="5.2" fill="none" stroke="#8a949e" stroke-width="0.7" stroke-dasharray="1.2 0.8"/>
<path d="M203 25.8Q204 21.8 207 21.6" fill="none" stroke="#aeb6be" stroke-width="0.7" />
<rect x="246.95" y="17.00" width="15.50" height="12.90" fill="#464646"/>
<rect x="262.95" y="17.00" width="15.50" height="12.90" fill="#464646"/>
<rect x="278.95" y="17.00" width="15.50" height="12.90" fill="#464646"/>
<rect x="294.95" y="17.00" width="15.50" height="12.90" fill="#464646"/>
<rect x="250.90" y="20.10" width="3.10" height="3.10" fill="#b9b9b9"/>
<rect x="255.80" y="24.60" width="3.10" height="3.10" fill="#b9b9b9"/>
<rect x="252.90" y="22.30" width="3.60" height="3.60" fill="#f0b536"/>
<rect x="269.90" y="23.20" width="4.60" height="4.40" fill="#f0b536"/>
<rect x="267.20" y="20.10" width="5.20" height="5.20" fill="#b9b9b9"/>
<rect x="267.20" y="20.10" width="5.2" height="5.2" fill="none" stroke="#8a8a8a" stroke-width="0.4"/>
<rect x="283.10" y="20.10" width="5.0" height="5.0" fill="#5a5a5a" stroke="#b4b4b4" stroke-width="0.6"/>
<rect x="285.20" y="22.10" width="5.60" height="5.60" fill="#f0b536"/>
<rect x="285.20" y="22.10" width="5.6" height="5.6" fill="none" stroke="#b98a20" stroke-width="0.4"/>
<rect x="298.80" y="20.00" width="4.2" height="4.2" fill="#5a5a5a" stroke="#b4b4b4" stroke-width="0.6"/>
<rect x="303.00" y="24.00" width="3.6" height="3.6" fill="#5a5a5a" stroke="#b4b4b4" stroke-width="0.6"/>
<rect x="300.40" y="21.50" width="5.00" height="5.00" fill="#f0b536"/>
<rect x="345.45" y="17.00" width="15.45" height="12.90" fill="#464646"/>
<rect x="361.40" y="17.00" width="15.45" height="12.90" fill="#464646"/>
<rect x="377.35" y="17.00" width="15.45" height="12.90" fill="#464646"/>
<rect x="393.30" y="17.00" width="15.45" height="12.90" fill="#464646"/>
<path d="M352.59999999999997 20.2L352.59999999999997 27.2L349.2 27.2Z" fill="#3f9af0" />
<path d="M353.8 20.2L353.8 27.2L357.2 27.2Z" fill="#c4c8cc" />
<path d="M372.59999999999997 23.3L372.59999999999997 20.0L365.59999999999997 23.3Z" fill="#3f9af0" />
<path d="M372.59999999999997 24.3L372.59999999999997 27.6L365.59999999999997 24.3Z" fill="#c4c8cc" />
<rect x="381.60" y="20.20" width="3.60" height="7.20" fill="#3f9af0"/>
<rect x="385.60" y="20.20" width="2.80" height="7.20" fill="#c4c8cc"/>
<path d="M386.2 22.2L388.0 22.2L388.0 23.8" fill="none" stroke="#333" stroke-width="0.6" />
<rect x="397.40" y="20.20" width="3.60" height="7.20" fill="#3f9af0"/>
<rect x="401.40" y="20.20" width="2.80" height="7.20" fill="#c4c8cc"/>
<path d="M402.0 25.400000000000002L403.8 25.400000000000002L403.8 23.8" fill="none" stroke="#333" stroke-width="0.6" />
<rect x="444.75" y="17.00" width="14.50" height="12.90" fill="#464646"/>
<line x1="448.80" y1="19.80" x2="448.80" y2="27.80" stroke="#3f9af0" stroke-width="0.8" />
<rect x="449.80" y="21.20" width="5.60" height="2.00" fill="#3f9af0"/>
<rect x="449.80" y="24.40" width="3.60" height="2.00" fill="#3f9af0"/>
<rect x="493.95" y="17.00" width="15.35" height="12.90" fill="#464646"/>
<rect x="509.80" y="17.00" width="15.35" height="12.90" fill="#292929"/>
<rect x="525.65" y="17.00" width="15.35" height="12.90" fill="#464646"/>
<line x1="498.60" y1="20.00" x2="498.60" y2="27.60" stroke="#9a9a9a" stroke-width="0.5" stroke-dasharray="0.8 0.7"/>
<line x1="497.80" y1="20.80" x2="505.40" y2="20.80" stroke="#9a9a9a" stroke-width="0.5" stroke-dasharray="0.8 0.7"/>
<line x1="501.60" y1="20.00" x2="501.60" y2="27.60" stroke="#9a9a9a" stroke-width="0.5" stroke-dasharray="0.8 0.7"/>
<line x1="497.80" y1="23.80" x2="505.40" y2="23.80" stroke="#9a9a9a" stroke-width="0.5" stroke-dasharray="0.8 0.7"/>
<line x1="504.60" y1="20.00" x2="504.60" y2="27.60" stroke="#9a9a9a" stroke-width="0.5" stroke-dasharray="0.8 0.7"/>
<line x1="497.80" y1="26.80" x2="505.40" y2="26.80" stroke="#9a9a9a" stroke-width="0.5" stroke-dasharray="0.8 0.7"/>
<rect x="500.70" y="22.90" width="1.80" height="1.80" fill="#e0453a"/>
<line x1="514.60" y1="23.20" x2="516.60" y2="23.20" stroke="#454545" stroke-width="0.6" />
<line x1="517.60" y1="22.20" x2="517.60" y2="24.40" stroke="#454545" stroke-width="0.6" />
<line x1="518.60" y1="23.20" x2="520.40" y2="23.20" stroke="#454545" stroke-width="0.6" />
<path d="M530.7 25.3L533.2 22.2A2.3 2.3 0 0 1 536.8000000000001 25.1L534.3000000000001 28.200000000000003" fill="none" stroke="#e8302a" stroke-width="2.3" />
<path d="M530.7 25.3L531.3000000000001 24.55" fill="none" stroke="#f4f4f4" stroke-width="2.3" />
<path d="M534.3000000000001 28.200000000000003L534.9 27.45" fill="none" stroke="#f4f4f4" stroke-width="2.3" />
<rect x="541.60" y="17.00" width="6.20" height="12.90" fill="#464646"/>
<path d="M543.30 23.43L546.10 23.43L544.70 25.25Z" fill="#f0f0f0" />
<rect x="582.25" y="17.00" width="15.46" height="12.90" fill="#464646"/>
<rect x="598.21" y="17.00" width="15.46" height="12.90" fill="#464646"/>
<rect x="614.17" y="17.00" width="15.46" height="12.90" fill="#464646"/>
<rect x="630.13" y="17.00" width="15.46" height="12.90" fill="#464646"/>
<rect x="646.09" y="17.00" width="15.46" height="12.90" fill="#464646"/>
<rect x="586.40" y="20.20" width="5.00" height="4.80" fill="#3f9af0"/>
<circle cx="591.60" cy="25.80" r="2.30" fill="#2d4f78" stroke="#4aa4f4" stroke-width="0.9"/>
<rect x="602.36" y="20.20" width="4.60" height="4.40" fill="#5b5b5b"/>
<circle cx="607.56" cy="25.80" r="2.20" fill="#4c4c4c" stroke="#5e5e5e" stroke-width="0.6"/>
<rect x="618.32" y="20.20" width="4.60" height="4.40" fill="#5b5b5b"/>
<circle cx="623.52" cy="25.80" r="2.20" fill="#4c4c4c" stroke="#5e5e5e" stroke-width="0.6"/>
<rect x="634.28" y="20.20" width="4.60" height="4.40" fill="#5b5b5b"/>
<circle cx="639.48" cy="25.80" r="2.20" fill="#4c4c4c" stroke="#5e5e5e" stroke-width="0.6"/>
<rect x="650.24" y="20.20" width="5.00" height="4.80" fill="#3f9af0"/>
<circle cx="655.44" cy="25.80" r="2.30" fill="#2d4f78" stroke="#4aa4f4" stroke-width="0.9"/>
<path d="M655.44 25.8L655.44 23.5A2.3 2.3 0 0 1 657.74 25.8Z" fill="#4aa4f4" />
<rect x="697.25" y="17.00" width="15.40" height="12.90" fill="#464646"/>
<rect x="713.15" y="17.00" width="15.40" height="12.90" fill="#464646"/>
<rect x="729.05" y="17.00" width="15.40" height="12.90" fill="#464646"/>
<rect x="704.00" y="22.60" width="4.60" height="4.60" fill="#3f9af0"/>
<circle cx="704.20" cy="23.20" r="3.10" fill="#ececec"/>
<rect x="719.90" y="22.60" width="4.60" height="4.60" fill="#3f9af0"/>
<circle cx="720.10" cy="23.20" r="3.10" fill="#d8d8d8"/>
<rect x="719.90" y="22.60" width="4.60" height="4.60" fill="#3f9af0"/>
<rect x="719.90" y="22.60" width="4.6" height="4.6" fill="none" stroke="#e8e8e8" stroke-width="0.4"/>
<rect x="735.80" y="22.60" width="4.60" height="4.60" fill="#3f9af0"/>
<circle cx="736.00" cy="23.20" r="3.10" fill="#ececec"/>
<path d="M736.0 23.2L739.0999999999999 23.2A3.1 3.1 0 0 1 736.0 26.3Z" fill="#3f9af0" />
<rect x="779.15" y="17.00" width="15.70" height="12.90" fill="#464646"/>
<circle cx="787.00" cy="22.20" r="1.70" fill="none" stroke="#e8e8e8" stroke-width="0.8"/>
<path d="M783.8 27.400000000000002A3.2 3.6 0 0 1 790.2 27.400000000000002" fill="none" stroke="#e8e8e8" stroke-width="0.8" />
<rect x="0.00" y="35.10" width="20.90" height="11.60" fill="#3d3d3d"/>
<rect x="22.80" y="35.10" width="35.50" height="11.60" fill="#3d3d3d"/>
<rect x="60.40" y="35.10" width="121.30" height="11.60" fill="#3d3d3d"/>
<rect x="188.50" y="35.10" width="49.30" height="11.60" fill="#424242"/>
<rect x="242.30" y="35.10" width="16.30" height="11.60" fill="#424242"/>
<rect x="267.10" y="35.10" width="34.40" height="11.60" fill="#424242"/>
<rect x="309.00" y="35.10" width="35.70" height="11.60" fill="#424242"/>
<text x="3.00" y="43.60" font-size="6.0" fill="#e6e6e6" stroke="#e6e6e6" stroke-width="0.16" textLength="14.60" lengthAdjust="spacingAndGlyphs">Curve</text>
<text x="25.00" y="43.60" font-size="6.0" fill="#e6e6e6" stroke="#e6e6e6" stroke-width="0.16" textLength="9.20" lengthAdjust="spacingAndGlyphs">Fill:</text>
<rect x="37.50" y="37.00" width="17.50" height="8.20" fill="#f07800"/>
<text x="62.50" y="43.60" font-size="6.0" fill="#e6e6e6" stroke="#e6e6e6" stroke-width="0.16" textLength="17.50" lengthAdjust="spacingAndGlyphs">Stroke:</text>
<rect x="84.00" y="37.00" width="18.00" height="8.20" fill="#ffffff"/>
<line x1="90.00" y1="45.00" x2="97.50" y2="37.20" stroke="#e63a30" stroke-width="0.8" />
<line x1="111.00" y1="41.30" x2="161.50" y2="41.30" stroke="#a8a8a8" stroke-width="0.6" />
<line x1="131.80" y1="46.60" x2="142.50" y2="36.40" stroke="#c42a22" stroke-width="0.9" />
<text x="163.50" y="43.60" font-size="6.0" fill="#e6e6e6" stroke="#e6e6e6" stroke-width="0.16" textLength="14.00" lengthAdjust="spacingAndGlyphs">None</text>
<circle cx="194.20" cy="40.80" r="2.20" fill="none" stroke="#c8c8c8" stroke-width="0.6"/>
<line x1="194.20" y1="39.60" x2="194.20" y2="41.20" stroke="#c8c8c8" stroke-width="0.6" />
<rect x="204.50" y="38.40" width="5.6" height="4.8" fill="none" stroke="#b8b8b8" stroke-width="0.6" stroke-dasharray="1.4 0.9"/>
<circle cx="207.30" cy="40.80" r="1.00" fill="#c8c8c8"/>
<rect x="216.50" y="38.40" width="5.6" height="4.8" fill="none" stroke="#b8b8b8" stroke-width="0.6" stroke-dasharray="1.4 0.9"/>
<circle cx="219.30" cy="40.80" r="1.00" fill="#c8c8c8"/>
<rect x="228.60" y="39.40" width="4.2" height="4.0" fill="none" stroke="#c8c8c8" stroke-width="0.7"/>
<rect x="230.60" y="37.80" width="3.4" height="3.0" fill="none" stroke="#c8c8c8" stroke-width="0.6"/>
<rect x="247.70" y="38.20" width="5.8" height="5.2" fill="none" stroke="#b8b8b8" stroke-width="0.6" stroke-dasharray="1.6 1.0"/>
<circle cx="250.60" cy="40.80" r="1.50" fill="none" stroke="#d0d0d0" stroke-width="0.6"/>
<line x1="270.30" y1="37.60" x2="270.30" y2="44.00" stroke="#3f9af0" stroke-width="0.7" />
<rect x="271.10" y="38.60" width="3.20" height="1.60" fill="#d8d8d8"/>
<rect x="271.10" y="41.20" width="5.00" height="1.60" fill="#d8d8d8"/>
<line x1="284.60" y1="37.60" x2="284.60" y2="44.00" stroke="#3f9af0" stroke-width="0.7" />
<rect x="283.00" y="38.60" width="3.20" height="1.60" fill="#d8d8d8"/>
<rect x="281.90" y="41.20" width="5.40" height="1.60" fill="#d8d8d8"/>
<line x1="299.20" y1="37.60" x2="299.20" y2="44.00" stroke="#3f9af0" stroke-width="0.7" />
<rect x="295.20" y="38.60" width="3.20" height="1.60" fill="#d8d8d8"/>
<rect x="293.40" y="41.20" width="5.00" height="1.60" fill="#d8d8d8"/>
<line x1="312.00" y1="38.00" x2="318.00" y2="38.00" stroke="#3f9af0" stroke-width="0.7" />
<rect x="312.80" y="38.80" width="1.60" height="3.00" fill="#d8d8d8"/>
<rect x="315.40" y="38.80" width="1.60" height="5.00" fill="#d8d8d8"/>
<line x1="324.20" y1="40.80" x2="330.60" y2="40.80" stroke="#3f9af0" stroke-width="0.7" />
<rect x="325.20" y="39.20" width="1.60" height="3.20" fill="#d8d8d8"/>
<rect x="327.80" y="38.10" width="1.60" height="5.40" fill="#d8d8d8"/>
<line x1="337.00" y1="43.70" x2="343.00" y2="43.70" stroke="#3f9af0" stroke-width="0.7" />
<rect x="337.80" y="39.90" width="1.60" height="3.00" fill="#d8d8d8"/>
<rect x="340.40" y="37.90" width="1.60" height="5.00" fill="#d8d8d8"/>
<rect x="1.40" y="49.90" width="12.60" height="11.50" fill="#1c1c1c" rx="0.8"/>
<path d="M6.1 52.1L6.1 58.1L7.6000000000000005 56.8L8.7 59.1L9.6 58.7L8.6 56.5L10.5 56.4Z" fill="#1c1c1c" stroke="#f0f0f0" stroke-width="0.7" />
<rect x="4.30" y="65.47" width="7.00" height="5.90" fill="#3f74b6"/>
<line x1="6.50" y1="65.47" x2="6.50" y2="71.37" stroke="#7fa4d0" stroke-width="0.5" />
<line x1="8.80" y1="65.47" x2="8.80" y2="71.37" stroke="#7fa4d0" stroke-width="0.5" />
<line x1="4.30" y1="67.37" x2="11.30" y2="67.37" stroke="#7fa4d0" stroke-width="0.5" />
<line x1="4.30" y1="69.37" x2="11.30" y2="69.37" stroke="#7fa4d0" stroke-width="0.5" />
<rect x="3.60" y="64.77" width="8.4" height="7.3" fill="none" stroke="#6aa0e0" stroke-width="0.6" stroke-dasharray="1.0 0.8"/>
<path d="M5.5 78.24L10.1 81.24L5.5 83.83999999999999Z" fill="#f2f2f2" />
<rect x="10.30" y="83.64" width="1.30" height="1.30" fill="#f2f2f2"/>
<path d="M4.9 97.51Q5.1 91.91 10.9 91.51" fill="none" stroke="#6aa8ea" stroke-width="1.0" />
<path d="M4.300000000000001 90.91L7.9 92.51L5.5 94.71Z" fill="#f2f2f2" />
<circle cx="7.70" cy="106.98" r="3.50" fill="none" stroke="#3d74c4" stroke-width="1.1"/>
<circle cx="7.70" cy="106.98" r="2.00" fill="none" stroke="#9aa6b4" stroke-width="0.8"/>
<circle cx="7.70" cy="106.98" r="0.80" fill="#c8ccd0"/>
<line x1="8.30" y1="106.38" x2="10.90" y2="103.78" stroke="#e89a60" stroke-width="0.8" />
<path d="M4.300000000000001 123.44999999999999L5.9 119.05L9.1 116.85L10.9 118.64999999999999L8.7 121.85Z" fill="#e8a33a" />
<circle cx="7.50" cy="120.05" r="0.80" fill="#5a3a10"/>
<path d="M9.1 116.85L10.3 115.85L11.9 117.44999999999999L10.9 118.64999999999999Z" fill="#f0d090" />
<path d="M4.1 136.32L5.1 133.52L9.7 129.12L11.5 130.92L6.9 135.32Z" fill="#4a98ec" />
<path d="M4.1 136.32L5.1 133.52L6.9 135.32Z" fill="#e8d8b8" />
<path d="M4.1 136.72Q7.7 135.32 11.5 136.52" fill="none" stroke="#6aa8ea" stroke-width="0.6" />
<path d="M7.1000000000000005 146.18999999999997L10.7 141.78999999999996L11.7 142.58999999999997L8.3 147.18999999999997Z" fill="#e0b080" />
<path d="M3.9000000000000004 149.18999999999997Q5.1 145.78999999999996 7.1000000000000005 146.18999999999997L8.3 147.18999999999997Q7.7 149.39 3.9000000000000004 149.18999999999997Z" fill="#d8452a" />
<path d="M7.7 158.45999999999998L7.70 154.86A3.6 3.6 0 0 1 10.82 156.66Z" fill="#e8443a" />
<path d="M7.7 158.45999999999998L10.82 156.66A3.6 3.6 0 0 1 10.82 160.26Z" fill="#f0a030" />
<path d="M7.7 158.45999999999998L10.82 160.26A3.6 3.6 0 0 1 7.70 162.06Z" fill="#e8e040" />
<path d="M7.7 158.45999999999998L7.70 162.06A3.6 3.6 0 0 1 4.58 160.26Z" fill="#50c050" />
<path d="M7.7 158.45999999999998L4.58 160.26A3.6 3.6 0 0 1 4.58 156.66Z" fill="#3a90e8" />
<path d="M7.7 158.45999999999998L4.58 156.66A3.6 3.6 0 0 1 7.70 154.86Z" fill="#a050d0" />
<circle cx="7.70" cy="158.46" r="1.50" fill="#303030"/>
<line x1="8.30" y1="157.86" x2="11.30" y2="154.66" stroke="#f0f0f0" stroke-width="0.7" />
<path d="M5.800000000000001 167.52999999999997L9.6 167.52999999999997L9.4 170.92999999999998Q7.7 172.52999999999997 6.0 170.92999999999998Z" fill="#f4f4f4" />
<line x1="7.70" y1="171.73" x2="7.70" y2="174.73" stroke="#f4f4f4" stroke-width="0.8" />
<line x1="6.10" y1="174.93" x2="9.30" y2="174.93" stroke="#f4f4f4" stroke-width="0.8" />
<rect x="3.90" y="181.30" width="7.60" height="5.80" fill="#3d8fe6"/>
<path d="M4.300000000000001 186.7L6.7 183.6L8.3 185.2L9.5 184.2L11.1 186.7Z" fill="#d8ecff" />
<circle cx="9.60" cy="182.80" r="0.70" fill="#f8f0c0"/>
<path d="M5.5 193.07L5.5 199.26999999999998L11.7 199.26999999999998M3.7 194.87L9.9 194.87L9.9 201.07" fill="none" stroke="#d4d4d4" stroke-width="0.7" />
<rect x="4.60" y="206.84" width="6.20" height="6.20" fill="#3488e4"/>
<circle cx="7.70" cy="222.81" r="3.20" fill="#3488e4"/>
<rect x="4.50" y="232.68" width="6.40" height="6.00" fill="#3488e4" rx="1.5"/>
<path d="M7.7 245.14999999999998L11.0 251.35L4.4 251.35Z" fill="#3488e4" />
<rect x="10.70" y="251.55" width="1.20" height="1.20" fill="#e0e0e0"/>
<rect x="3.60" y="257.32" width="8.20" height="8.20" fill="#cfcfcf" rx="0.8"/>
<rect x="4.50" y="258.22" width="6.40" height="6.40" fill="#f2f2f2" rx="0.4"/>
<path d="M5.7 259.41999999999996L9.7 259.41999999999996M7.7 259.41999999999996L7.7 263.81999999999994" fill="none" stroke="#2a2a2a" stroke-width="1.1" />
<rect x="10.70" y="264.42" width="1.20" height="1.20" fill="#e0e0e0"/>
<line x1="4.30" y1="277.89" x2="8.30" y2="273.69" stroke="#9a9a9a" stroke-width="1.2" />
<line x1="8.10" y1="273.89" x2="9.90" y2="272.09" stroke="#5a5a5a" stroke-width="1.9" />
<line x1="9.30" y1="272.49" x2="10.90" y2="270.69" stroke="#e8923a" stroke-width="1.7" />
<path d="M4.300000000000001 287.55999999999995L5.300000000000001 288.15999999999997L5.2 284.76L6.1 284.55999999999995L6.4 286.76L6.6 283.55999999999995L7.6000000000000005 283.35999999999996L7.8 286.55999999999995L8.3 283.76L9.3 283.96L9.1 286.96L9.9 284.96L10.8 285.35999999999996L10.3 288.76L9.1 291.05999999999995L6.1 291.05999999999995Z" fill="#f4e4d0" stroke="#d8803a" stroke-width="0.5" />
<circle cx="7.10" cy="299.23" r="2.70" fill="#8cc0f4" stroke="#3d8fe6" stroke-width="1.0"/>
<line x1="9.10" y1="301.43" x2="11.30" y2="303.83" stroke="#d8d8d8" stroke-width="1.2" />
<rect x="16.40" y="48.30" width="122.00" height="10.10" fill="#262626"/>
<rect x="16.40" y="58.40" width="122.00" height="4.40" fill="#424242"/>
<rect x="19.90" y="51.20" width="0.70" height="0.70" fill="#5a5a5a"/>
<rect x="21.20" y="51.20" width="0.70" height="0.70" fill="#5a5a5a"/>
<rect x="19.90" y="52.60" width="0.70" height="0.70" fill="#5a5a5a"/>
<rect x="21.20" y="52.60" width="0.70" height="0.70" fill="#5a5a5a"/>
<rect x="19.90" y="54.00" width="0.70" height="0.70" fill="#5a5a5a"/>
<rect x="21.20" y="54.00" width="0.70" height="0.70" fill="#5a5a5a"/>
<rect x="19.90" y="55.40" width="0.70" height="0.70" fill="#5a5a5a"/>
<rect x="21.20" y="55.40" width="0.70" height="0.70" fill="#5a5a5a"/>
<text x="27.00" y="55.10" font-size="6.0" fill="#b4b4b4" stroke="#b4b4b4" stroke-width="0.16" textLength="13.80" lengthAdjust="spacingAndGlyphs">Assets</text>
<rect x="44.00" y="48.30" width="31.40" height="10.20" fill="#424242"/>
<text x="46.00" y="55.10" font-size="6.0" fill="#f4f4f4" stroke="#f4f4f4" stroke-width="0.16" textLength="26.50" lengthAdjust="spacingAndGlyphs">Appearance</text>
<rect x="20.60" y="70.10" width="1.50" height="1.50" fill="#f0f0f0"/>
<circle cx="29.80" cy="71.30" r="2.90" fill="none" stroke="#f6f6f6" stroke-width="1.7"/>
<line x1="31.40" y1="69.70" x2="32.60" y2="68.50" stroke="#e23a30" stroke-width="1.2" />
<line x1="27.00" y1="74.10" x2="28.20" y2="72.90" stroke="#e23a30" stroke-width="1.2" />
<text x="36.00" y="73.90" font-size="6.0" fill="#f0f0f0" stroke="#f0f0f0" stroke-width="0.16" textLength="28.70" lengthAdjust="spacingAndGlyphs">Stroke: 0 pt,</text>
<text x="68.00" y="73.40" font-size="5.6" fill="#ececec" stroke="#ececec" stroke-width="0.16" textLength="17.00" lengthAdjust="spacingAndGlyphs">Normal</text>
<rect x="129.10" y="69.10" width="3.7" height="3.7" rx="0.15" fill="none" stroke="#ececec" stroke-width="1.0"/>
<path d="M130.00 71.02L130.65 72.06L132.61 69.40" fill="none" stroke="#ffffff" stroke-width="1.2" />
<rect x="20.60" y="84.70" width="1.50" height="1.50" fill="#f0f0f0"/>
<circle cx="29.80" cy="85.90" r="4.30" fill="#f07800"/>
<text x="36.00" y="88.40" font-size="6.0" fill="#f0f0f0" stroke="#f0f0f0" stroke-width="0.16" textLength="8.20" lengthAdjust="spacingAndGlyphs">Fill:</text>
<text x="47.00" y="87.90" font-size="5.6" fill="#ececec" stroke="#ececec" stroke-width="0.16" textLength="16.50" lengthAdjust="spacingAndGlyphs">Normal</text>
<rect x="129.10" y="83.90" width="3.7" height="3.7" rx="0.15" fill="none" stroke="#ececec" stroke-width="1.0"/>
<path d="M130.00 85.82L130.65 86.86L132.61 84.20" fill="none" stroke="#ffffff" stroke-width="1.2" />
<rect x="16.40" y="435.30" width="119.80" height="8.20" fill="#3b3b3b"/>
<circle cx="20.70" cy="439.30" r="2.40" fill="none" stroke="#e0e0e0" stroke-width="0.7"/>
<circle cx="20.70" cy="439.30" r="0.90" fill="#e0e0e0"/>
<text x="26.00" y="441.40" font-size="6.0" fill="#e8e8e8" stroke="#e8e8e8" stroke-width="0.16" textLength="27.60" lengthAdjust="spacingAndGlyphs">Add Stroke</text>
<circle cx="60.60" cy="439.30" r="2.70" fill="#f0f0f0"/>
<circle cx="60.60" cy="439.30" r="1.00" fill="#3b3b3b"/>
<text x="66.00" y="441.40" font-size="6.0" fill="#e8e8e8" stroke="#e8e8e8" stroke-width="0.16" textLength="18.60" lengthAdjust="spacingAndGlyphs">Add Fill</text>
<rect x="132.00" y="436.60" width="0.70" height="0.70" fill="#777"/>
<rect x="133.30" y="436.60" width="0.70" height="0.70" fill="#777"/>
<rect x="132.00" y="438.00" width="0.70" height="0.70" fill="#777"/>
<rect x="133.30" y="438.00" width="0.70" height="0.70" fill="#777"/>
<rect x="132.00" y="439.40" width="0.70" height="0.70" fill="#777"/>
<rect x="133.30" y="439.40" width="0.70" height="0.70" fill="#777"/>
<rect x="132.00" y="440.80" width="0.70" height="0.70" fill="#777"/>
<rect x="133.30" y="440.80" width="0.70" height="0.70" fill="#777"/>
<text x="6.20" y="452.60" font-size="5.5" fill="#cfcfcf" stroke="#cfcfcf" stroke-width="0.16" textLength="40.80" lengthAdjust="spacingAndGlyphs">'Curve' selected.</text>
<text x="47.60" y="452.60" font-size="5.5" fill="#ffffff" font-weight="bold" stroke="#ffffff" stroke-width="0.16" textLength="12.60" lengthAdjust="spacingAndGlyphs">Drag</text>
<text x="61.60" y="452.60" font-size="5.5" fill="#cfcfcf" stroke="#cfcfcf" stroke-width="0.16" textLength="45.20" lengthAdjust="spacingAndGlyphs">to move selection.</text>
<text x="108.00" y="452.60" font-size="5.5" fill="#ffffff" font-weight="bold" stroke="#ffffff" stroke-width="0.16" textLength="11.60" lengthAdjust="spacingAndGlyphs">Click</text>
<text x="121.00" y="452.60" font-size="5.5" fill="#cfcfcf" stroke="#cfcfcf" stroke-width="0.16" textLength="64.20" lengthAdjust="spacingAndGlyphs">another object to select it.</text>
<text x="186.50" y="452.60" font-size="5.5" fill="#ffffff" font-weight="bold" stroke="#ffffff" stroke-width="0.16" textLength="12.30" lengthAdjust="spacingAndGlyphs">Click</text>
<text x="200.20" y="452.60" font-size="5.5" fill="#cfcfcf" stroke="#cfcfcf" stroke-width="0.16" textLength="96.00" lengthAdjust="spacingAndGlyphs">on an empty area to deselect selection.</text>
<text x="143.60" y="55.00" font-size="5.6" fill="#ececec" stroke="#ececec" stroke-width="0.16" textLength="50.40" lengthAdjust="spacingAndGlyphs">wind rose.pdf (128.6%)</text>
<path d="M666.6 51.2L669.8 54.4M669.8 51.2L666.6 54.4" fill="none" stroke="#e0e0e0" stroke-width="0.8" />
<path d="M668.80 63.50L671.80 63.50L670.30 61.40Z" fill="#8e8e8e" />
<path d="M668.80 427.68L671.80 427.68L670.30 429.62Z" fill="#8e8e8e" />
<rect x="668.70" y="192.70" width="2.40" height="105.50" fill="#8a8a8a" rx="1.2"/>
<path d="M144.6 437.8L144.6 441.0L142.2 439.4Z" fill="#8e8e8e" />
<path d="M660.8 437.8L660.8 441.0L663.2 439.4Z" fill="#8e8e8e" />
<rect x="328.00" y="438.00" width="154.00" height="2.80" fill="#8a8a8a" rx="1.4"/>
<rect x="674.60" y="47.30" width="125.40" height="396.40" fill="#383838"/>
<rect x="674.60" y="47.80" width="125.40" height="10.60" fill="#272727"/>
<rect x="678.60" y="51.00" width="0.70" height="0.70" fill="#5a5a5a"/>
<rect x="679.90" y="51.00" width="0.70" height="0.70" fill="#5a5a5a"/>
<rect x="678.60" y="52.40" width="0.70" height="0.70" fill="#5a5a5a"/>
<rect x="679.90" y="52.40" width="0.70" height="0.70" fill="#5a5a5a"/>
<rect x="678.60" y="53.80" width="0.70" height="0.70" fill="#5a5a5a"/>
<rect x="679.90" y="53.80" width="0.70" height="0.70" fill="#5a5a5a"/>
<rect x="678.60" y="55.20" width="0.70" height="0.70" fill="#5a5a5a"/>
<rect x="679.90" y="55.20" width="0.70" height="0.70" fill="#5a5a5a"/>
<text x="686.00" y="55.00" font-size="6.0" fill="#c4c4c4" stroke="#c4c4c4" stroke-width="0.16" textLength="11.70" lengthAdjust="spacingAndGlyphs">Color</text>
<text x="702.10" y="55.00" font-size="6.0" fill="#c4c4c4" stroke="#c4c4c4" stroke-width="0.16" textLength="20.80" lengthAdjust="spacingAndGlyphs">Swatches</text>
<rect x="725.80" y="47.80" width="18.50" height="10.70" fill="#454545"/>
<text x="727.60" y="55.00" font-size="6.0" fill="#ffffff" stroke="#ffffff" stroke-width="0.16" textLength="14.10" lengthAdjust="spacingAndGlyphs">Stroke</text>
<text x="746.60" y="55.00" font-size="6.0" fill="#c4c4c4" stroke="#c4c4c4" stroke-width="0.16" textLength="17.40" lengthAdjust="spacingAndGlyphs">Brushes</text>
<rect x="674.60" y="58.40" width="125.40" height="15.50" fill="#454545"/>
<text x="681.40" y="68.50" font-size="6.0" fill="#e8e8e8" stroke="#e8e8e8" stroke-width="0.16" textLength="12.30" lengthAdjust="spacingAndGlyphs">Style:</text>
<rect x="699.70" y="62.40" width="10.15" height="8.90" fill="#262626"/>
<rect x="710.25" y="62.40" width="10.15" height="8.90" fill="#3a3a3a"/>
<rect x="720.80" y="62.40" width="10.15" height="8.90" fill="#3a3a3a"/>
<rect x="731.35" y="62.40" width="10.15" height="8.90" fill="#3a3a3a"/>
<circle cx="704.77" cy="66.90" r="3.00" fill="none" stroke="#e8e8e8" stroke-width="0.7"/>
<line x1="702.67" y1="69.00" x2="706.88" y2="64.80" stroke="#e8483c" stroke-width="0.8" />
<line x1="712.72" y1="69.70" x2="717.92" y2="64.10" stroke="#e8e8e8" stroke-width="0.8" />
<line x1="723.27" y1="69.70" x2="728.47" y2="64.10" stroke="#c8c8c8" stroke-width="0.8" stroke-dasharray="1.3 1.1"/>
<line x1="733.62" y1="69.90" x2="736.62" y2="66.70" stroke="#d8d8d8" stroke-width="1.5" />
<line x1="736.42" y1="66.90" x2="738.82" y2="63.90" stroke="#f0f0f0" stroke-width="0.9" />
<text x="681.40" y="83.20" font-size="6.0" fill="#e8e8e8" stroke="#e8e8e8" stroke-width="0.16" textLength="14.60" lengthAdjust="spacingAndGlyphs">Width:</text>
<line x1="702.00" y1="81.40" x2="762.80" y2="81.40" stroke="#5a5a5a" stroke-width="0.7" />
<circle cx="701.90" cy="81.40" r="2.00" fill="#d8d8d8"/>
<rect x="765.40" y="77.40" width="29.50" height="8.30" fill="#2a2a2a"/>
<text x="768.00" y="83.40" font-size="6.0" fill="#e8e8e8" stroke="#e8e8e8" stroke-width="0.16" textLength="8.90" lengthAdjust="spacingAndGlyphs">0 pt</text>
<text x="681.40" y="93.40" font-size="6.0" fill="#e8e8e8" stroke="#e8e8e8" stroke-width="0.16" textLength="10.40" lengthAdjust="spacingAndGlyphs">Cap:</text>
<rect x="700.10" y="87.80" width="9.75" height="8.30" fill="#2b2b2b"/>
<line x1="701.85" y1="89.90" x2="706.15" y2="89.90" stroke="#e6e6e6" stroke-width="0.8" />
<line x1="701.85" y1="94.10" x2="706.15" y2="94.10" stroke="#e6e6e6" stroke-width="0.8" />
<path d="M706.15 89.9A2.1 2.1 0 0 1 706.15 94.1" fill="none" stroke="#e6e6e6" stroke-width="0.8" />
<line x1="701.95" y1="92.00" x2="706.15" y2="92.00" stroke="#3f9af0" stroke-width="1.0" />
<circle cx="705.15" cy="92.00" r="0.70" fill="#8cc8ff"/>
<rect x="710.40" y="87.80" width="9.75" height="8.30" fill="#222222"/>
<line x1="712.15" y1="89.90" x2="716.45" y2="89.90" stroke="#e6e6e6" stroke-width="0.8" />
<line x1="712.15" y1="94.10" x2="716.45" y2="94.10" stroke="#e6e6e6" stroke-width="0.8" />
<line x1="716.45" y1="89.60" x2="716.45" y2="94.40" stroke="#e6e6e6" stroke-width="0.8" />
<line x1="712.25" y1="92.00" x2="718.25" y2="92.00" stroke="#3f9af0" stroke-width="1.0" />
<path d="M717.2499999999999 90.8L718.6499999999999 92.0L717.2499999999999 93.2" fill="none" stroke="#3f9af0" stroke-width="0.8" />
<circle cx="715.45" cy="92.00" r="0.70" fill="#8cc8ff"/>
<rect x="720.70" y="87.80" width="9.75" height="8.30" fill="#2b2b2b"/>
<line x1="722.45" y1="89.90" x2="727.85" y2="89.90" stroke="#e6e6e6" stroke-width="0.8" />
<line x1="722.45" y1="94.10" x2="727.85" y2="94.10" stroke="#e6e6e6" stroke-width="0.8" />
<line x1="727.85" y1="89.60" x2="727.85" y2="94.40" stroke="#e6e6e6" stroke-width="0.8" />
<line x1="722.55" y1="92.00" x2="726.75" y2="92.00" stroke="#3f9af0" stroke-width="1.0" />
<circle cx="725.75" cy="92.00" r="0.70" fill="#8cc8ff"/>
<line x1="699.80" y1="96.60" x2="730.80" y2="96.60" stroke="#474747" stroke-width="0.6" />
<text x="681.40" y="104.40" font-size="6.0" fill="#e8e8e8" stroke="#e8e8e8" stroke-width="0.16" textLength="10.40" lengthAdjust="spacingAndGlyphs">Join:</text>
<rect x="700.10" y="98.60" width="9.75" height="8.40" fill="#222222"/>
<rect x="704.35" y="101.20" width="3.40" height="3.60" fill="#2f78c8"/>
<path d="M702.3499999999999 100.0L702.3499999999999 102.8Q702.3499999999999 105.6 705.3499999999999 105.6L708.15 105.6" fill="none" stroke="#e6e6e6" stroke-width="0.8" />
<path d="M704.3499999999999 100.0L704.3499999999999 103.6L708.15 103.6" fill="none" stroke="#e6e6e6" stroke-width="0.6" />
<circle cx="705.75" cy="102.60" r="0.80" fill="#8cc8ff"/>
<rect x="710.40" y="98.60" width="9.75" height="8.40" fill="#2b2b2b"/>
<rect x="714.65" y="101.20" width="3.40" height="3.60" fill="#2f78c8"/>
<path d="M712.6499999999999 100.0L712.6499999999999 104.0L714.2499999999999 105.6L718.4499999999999 105.6" fill="none" stroke="#e6e6e6" stroke-width="0.8" />
<path d="M714.6499999999999 100.0L714.6499999999999 103.6L718.4499999999999 103.6" fill="none" stroke="#e6e6e6" stroke-width="0.6" />
<circle cx="716.05" cy="102.60" r="0.80" fill="#8cc8ff"/>
<rect x="720.70" y="98.60" width="9.75" height="8.40" fill="#2b2b2b"/>
<rect x="724.95" y="101.20" width="3.40" height="3.60" fill="#2f78c8"/>
<path d="M722.9499999999999 100.0L722.9499999999999 105.6L728.75 105.6" fill="none" stroke="#e6e6e6" stroke-width="0.8" />
<path d="M724.9499999999999 100.0L724.9499999999999 103.6L728.75 103.6" fill="none" stroke="#e6e6e6" stroke-width="0.6" />
<circle cx="726.35" cy="102.60" r="0.80" fill="#8cc8ff"/>
<line x1="699.80" y1="107.50" x2="730.80" y2="107.50" stroke="#474747" stroke-width="0.6" />
<text x="750.10" y="104.40" font-size="6.0" fill="#e8e8e8" stroke="#e8e8e8" stroke-width="0.16" textLength="13.00" lengthAdjust="spacingAndGlyphs">Miter:</text>
<rect x="765.40" y="98.80" width="29.50" height="8.10" fill="#2a2a2a"/>
<text x="768.00" y="104.80" font-size="6.0" fill="#e8e8e8" stroke="#e8e8e8" stroke-width="0.16" textLength="3.20" lengthAdjust="spacingAndGlyphs">2</text>
<text x="681.40" y="115.80" font-size="6.0" fill="#e8e8e8" stroke="#e8e8e8" stroke-width="0.16" textLength="12.80" lengthAdjust="spacingAndGlyphs">Align:</text>
<rect x="700.10" y="109.90" width="9.75" height="7.90" fill="#222222"/>
<path d="M703.9499999999999 116.9L703.9499999999999 114.30000000000001Q703.9499999999999 112.7 705.7499999999999 112.7L708.15 112.7" fill="none" stroke="#3f9af0" stroke-width="1.6" />
<path d="M702.3499999999999 116.9L702.3499999999999 114.10000000000001Q702.3499999999999 111.30000000000001 705.3499999999999 111.30000000000001L708.15 111.30000000000001" fill="none" stroke="#e6e6e6" stroke-width="0.8" />
<circle cx="705.15" cy="114.30" r="0.70" fill="#8cc8ff"/>
<rect x="710.40" y="109.90" width="9.75" height="7.90" fill="#2b2b2b"/>
<rect x="712.65" y="111.10" width="5.60" height="2.20" fill="#2f78c8"/>
<rect x="712.65" y="111.10" width="2.20" height="5.60" fill="#2f78c8"/>
<path d="M715.2499999999999 116.9L715.2499999999999 114.10000000000001Q715.2499999999999 113.9 717.2499999999999 113.9L718.4499999999999 113.9" fill="none" stroke="#e6e6e6" stroke-width="0.8" />
<circle cx="714.05" cy="112.50" r="0.70" fill="#8cc8ff"/>
<rect x="720.70" y="109.90" width="9.75" height="7.90" fill="#2b2b2b"/>
<rect x="725.15" y="113.50" width="3.00" height="3.00" fill="#2f78c8"/>
<path d="M722.9499999999999 116.9L722.9499999999999 114.10000000000001Q722.9499999999999 111.30000000000001 725.9499999999999 111.30000000000001L728.75 111.30000000000001" fill="none" stroke="#e6e6e6" stroke-width="0.8" />
<circle cx="726.95" cy="115.10" r="0.70" fill="#8cc8ff"/>
<line x1="699.80" y1="118.30" x2="730.80" y2="118.30" stroke="#474747" stroke-width="0.6" />
<line x1="677.00" y1="124.40" x2="798.00" y2="124.40" stroke="#4b4b4b" stroke-width="0.7" />
<text x="681.40" y="137.70" font-size="6.0" fill="#e8e8e8" stroke="#e8e8e8" stroke-width="0.16" textLength="14.60" lengthAdjust="spacingAndGlyphs">Order:</text>
<rect x="700.20" y="132.00" width="9.90" height="8.70" fill="#2e2e2e"/>
<rect x="702.55" y="133.70" width="3.8" height="3.8" rx="0.6" fill="none" stroke="#4a9cf0" stroke-width="0.8"/>
<rect x="704.35" y="135.50" width="3.40" height="3.40" fill="#e8e8e8" rx="0.5"/>
<rect x="710.50" y="132.00" width="9.90" height="8.70" fill="#262626"/>
<rect x="714.65" y="135.50" width="3.40" height="3.40" fill="#d0d0d0" rx="0.5"/>
<rect x="712.85" y="133.70" width="3.8" height="3.8" rx="0.6" fill="#262626" stroke="#4a9cf0" stroke-width="0.8"/>
<rect x="750.40" y="133.60" width="4.40" height="4.40" fill="#6a6a6a" rx="0.5"/>
<text x="757.10" y="137.70" font-size="6.0" fill="#e8e8e8" stroke="#e8e8e8" stroke-width="0.16" textLength="38.20" lengthAdjust="spacingAndGlyphs">Scale with object</text>
<line x1="677.00" y1="146.90" x2="798.00" y2="146.90" stroke="#4b4b4b" stroke-width="0.7" />
<text x="681.40" y="160.50" font-size="6.0" fill="#5a5a5a" stroke="#5a5a5a" stroke-width="0.16" textLength="11.60" lengthAdjust="spacingAndGlyphs">Start:</text>
<rect x="700.00" y="155.10" width="18.80" height="8.30" fill="#474747"/>
<line x1="703.90" y1="159.20" x2="713.00" y2="159.20" stroke="#d8d8d8" stroke-width="1.0" />
<path d="M715.20 158.75L717.20 158.75L716.20 160.05Z" fill="#b0b0b0" />
<rect x="721.80" y="155.10" width="29.50" height="8.30" fill="#2c2c2c"/>
<text x="724.60" y="161.20" font-size="6.0" fill="#a4a4a4" stroke="#a4a4a4" stroke-width="0.16" textLength="13.50" lengthAdjust="spacingAndGlyphs">100 %</text>
<path d="M747.60 158.75L749.60 158.75L748.60 160.05Z" fill="#b0b0b0" />
<text x="681.40" y="172.40" font-size="6.0" fill="#5a5a5a" stroke="#5a5a5a" stroke-width="0.16" textLength="9.00" lengthAdjust="spacingAndGlyphs">End:</text>
<rect x="700.00" y="167.00" width="18.80" height="8.30" fill="#474747"/>
<line x1="703.90" y1="171.10" x2="713.00" y2="171.10" stroke="#d8d8d8" stroke-width="1.0" />
<path d="M715.20 170.65L717.20 170.65L716.20 171.95Z" fill="#b0b0b0" />
<rect x="721.80" y="167.00" width="29.50" height="8.30" fill="#2c2c2c"/>
<text x="724.60" y="173.10" font-size="6.0" fill="#a4a4a4" stroke="#a4a4a4" stroke-width="0.16" textLength="13.50" lengthAdjust="spacingAndGlyphs">100 %</text>
<path d="M747.60 170.65L749.60 170.65L748.60 171.95Z" fill="#b0b0b0" />
<rect x="754.20" y="161.40" width="1.40" height="6.20" fill="#5a5a5a"/>
<rect x="773.60" y="155.10" width="10.40" height="7.90" fill="#2a2a2a"/>
<rect x="784.40" y="155.10" width="10.00" height="7.90" fill="#333333"/>
<line x1="776.60" y1="159.00" x2="781.20" y2="159.00" stroke="#555" stroke-width="0.7" />
<line x1="787.00" y1="159.00" x2="792.00" y2="159.00" stroke="#666" stroke-width="0.7" />
<path d="M790.6 157.8L792.0 159.0L790.6 160.2" fill="none" stroke="#666" stroke-width="0.6" />
<rect x="786.00" y="167.40" width="8.40" height="8.00" fill="#333333"/>
<circle cx="790.20" cy="171.40" r="2.30" fill="none" stroke="#9a9a9a" stroke-width="0.7"/>
<line x1="677.00" y1="181.50" x2="798.00" y2="181.50" stroke="#4b4b4b" stroke-width="0.7" />
<rect x="681.90" y="187.70" width="36.60" height="9.60" fill="#474747"/>
<text x="685.40" y="194.30" font-size="6.4" fill="#f4f4f4" stroke="#f4f4f4" stroke-width="0.16" textLength="29.40" lengthAdjust="spacingAndGlyphs">Properties...</text>
<text x="721.80" y="194.10" font-size="5.8" fill="#e8e8e8" stroke="#e8e8e8" stroke-width="0.16" textLength="19.90" lengthAdjust="spacingAndGlyphs">Pressure:</text>
<rect x="744.00" y="188.20" width="36.00" height="8.60" fill="#4c4c4c"/>
<rect x="674.60" y="200.30" width="125.40" height="10.20" fill="#272727"/>
<rect x="678.60" y="203.40" width="0.70" height="0.70" fill="#5a5a5a"/>
<rect x="679.90" y="203.40" width="0.70" height="0.70" fill="#5a5a5a"/>
<rect x="678.60" y="204.80" width="0.70" height="0.70" fill="#5a5a5a"/>
<rect x="679.90" y="204.80" width="0.70" height="0.70" fill="#5a5a5a"/>
<rect x="678.60" y="206.20" width="0.70" height="0.70" fill="#5a5a5a"/>
<rect x="679.90" y="206.20" width="0.70" height="0.70" fill="#5a5a5a"/>
<rect x="678.60" y="207.60" width="0.70" height="0.70" fill="#5a5a5a"/>
<rect x="679.90" y="207.60" width="0.70" height="0.70" fill="#5a5a5a"/>
<rect x="683.70" y="200.30" width="18.40" height="10.30" fill="#454545"/>
<text x="686.00" y="207.20" font-size="6.0" fill="#ffffff" stroke="#ffffff" stroke-width="0.16" textLength="14.00" lengthAdjust="spacingAndGlyphs">Layers</text>
<text x="704.20" y="207.20" font-size="6.0" fill="#c4c4c4" stroke="#c4c4c4" stroke-width="0.16" textLength="14.60" lengthAdjust="spacingAndGlyphs">Effects</text>
<text x="723.70" y="207.20" font-size="6.0" fill="#c4c4c4" stroke="#c4c4c4" stroke-width="0.16" textLength="12.30" lengthAdjust="spacingAndGlyphs">Styles</text>
<text x="741.10" y="207.20" font-size="6.0" fill="#c4c4c4" stroke="#c4c4c4" stroke-width="0.16" textLength="22.90" lengthAdjust="spacingAndGlyphs">Text Styles</text>
<text x="768.90" y="207.20" font-size="6.0" fill="#c4c4c4" stroke="#c4c4c4" stroke-width="0.16" textLength="11.40" lengthAdjust="spacingAndGlyphs">Stock</text>
<rect x="792.00" y="203.60" width="3.00" height="3.00" fill="#d0d0d0"/>
<path d="M795.50 206.10L797.30 206.10L796.40 207.28Z" fill="#d0d0d0" />
<rect x="674.60" y="210.50" width="125.40" height="13.70" fill="#454545"/>
<text x="678.90" y="219.50" font-size="5.8" fill="#e8e8e8" stroke="#e8e8e8" stroke-width="0.16" textLength="16.50" lengthAdjust="spacingAndGlyphs">Opacity:</text>
<rect x="697.70" y="212.90" width="33.90" height="8.80" fill="#2c2c2c"/>
<text x="700.40" y="219.30" font-size="6.0" fill="#f0f0f0" stroke="#f0f0f0" stroke-width="0.16" textLength="13.10" lengthAdjust="spacingAndGlyphs">100 %</text>
<path d="M727.30 216.70L729.50 216.70L728.40 218.12Z" fill="#d8d8d8" />
<rect x="733.80" y="212.90" width="43.00" height="8.80" fill="#2c2c2c"/>
<text x="735.90" y="219.40" font-size="6.0" fill="#f0f0f0" stroke="#f0f0f0" stroke-width="0.16" textLength="16.70" lengthAdjust="spacingAndGlyphs">Normal</text>
<path d="M772.30 216.70L774.50 216.70L773.40 218.12Z" fill="#d8d8d8" />
<circle cx="782.40" cy="217.30" r="1.90" fill="none" stroke="#e4e4e4" stroke-width="1.3"/>
<line x1="779.40" y1="217.30" x2="785.40" y2="217.30" stroke="#e4e4e4" stroke-width="0.8" />
<line x1="780.28" y1="215.18" x2="784.52" y2="219.42" stroke="#e4e4e4" stroke-width="0.8" />
<line x1="782.40" y1="214.30" x2="782.40" y2="220.30" stroke="#e4e4e4" stroke-width="0.8" />
<line x1="784.52" y1="215.18" x2="780.28" y2="219.42" stroke="#e4e4e4" stroke-width="0.8" />
<circle cx="782.40" cy="217.30" r="0.90" fill="#454545"/>
<rect x="790.60" y="216.60" width="4.40" height="3.60" fill="#e4e4e4" rx="0.5"/>
<path d="M791.6 216.8L791.6 215.4A1.2 1.3 0 0 1 794.0 215.4L794.0 216.8" fill="none" stroke="#e4e4e4" stroke-width="0.8" />
<rect x="674.60" y="224.20" width="125.40" height="150.70" fill="#303030"/>
<rect x="791.40" y="224.20" width="8.60" height="150.70" fill="#3a3a3a"/>
<path d="M793.90 229.04L796.70 229.04L795.30 227.08Z" fill="#9a9a9a" />
<circle cx="795.30" cy="318.00" r="1.10" fill="#8a8a8a"/>
<path d="M793.90 369.43L796.70 369.43L795.30 371.25Z" fill="#9a9a9a" />
<clipPath id="lc"><rect x="674" y="224.2" width="126" height="150.7"/></clipPath><g clip-path="url(#lc)">
<rect x="674.90" y="224.60" width="116.50" height="13.65" fill="#3a3a3a"/>
<rect x="689.50" y="224.60" width="12.60" height="13.65" fill="#292929"/>
<clipPath id="t0"><rect x="689.5" y="224.60" width="12.6" height="13.65"/></clipPath>
<line x1="690.76" y1="225.87" x2="700.28" y2="237.03" stroke="#f07800" stroke-width="1.0" clip-path="url(#t0)"/>
<text x="704.20" y="233.20" font-size="6.0" fill="#ececec" stroke="#ececec" stroke-width="0.16" textLength="17.30" lengthAdjust="spacingAndGlyphs">(Curve)</text>
<rect x="784.20" y="228.90" width="5.0" height="5.0" rx="0.15" fill="none" stroke="#d8d8d8" stroke-width="0.7"/>
<path d="M785.10 231.50L786.30 232.90L788.95 229.30" fill="none" stroke="#ffffff" stroke-width="0.9" />
<rect x="674.90" y="238.90" width="116.50" height="13.65" fill="#3a3a3a"/>
<rect x="689.50" y="238.90" width="12.60" height="13.65" fill="#292929"/>
<clipPath id="t1"><rect x="689.5" y="238.90" width="12.6" height="13.65"/></clipPath>
<line x1="693.84" y1="240.79" x2="697.20" y2="251.33" stroke="#f07800" stroke-width="0.7" clip-path="url(#t1)"/>
<text x="704.20" y="247.50" font-size="6.0" fill="#ececec" stroke="#ececec" stroke-width="0.16" textLength="17.30" lengthAdjust="spacingAndGlyphs">(Curve)</text>
<rect x="784.20" y="243.20" width="5.0" height="5.0" rx="0.15" fill="none" stroke="#d8d8d8" stroke-width="0.7"/>
<path d="M785.10 245.80L786.30 247.20L788.95 243.60" fill="none" stroke="#ffffff" stroke-width="0.9" />
<rect x="674.90" y="253.20" width="116.50" height="13.65" fill="#3a3a3a"/>
<rect x="689.50" y="253.20" width="12.60" height="13.65" fill="#292929"/>
<clipPath id="t2"><rect x="689.5" y="253.20" width="12.6" height="13.65"/></clipPath>
<line x1="690.20" y1="255.40" x2="700.84" y2="265.32" stroke="#f07800" stroke-width="1.4" clip-path="url(#t2)"/>
<text x="704.20" y="261.80" font-size="6.0" fill="#ececec" stroke="#ececec" stroke-width="0.16" textLength="17.30" lengthAdjust="spacingAndGlyphs">(Curve)</text>
<rect x="784.20" y="257.50" width="5.0" height="5.0" rx="0.15" fill="none" stroke="#d8d8d8" stroke-width="0.7"/>
<path d="M785.10 260.10L786.30 261.50L788.95 257.90" fill="none" stroke="#ffffff" stroke-width="0.9" />
<rect x="674.90" y="267.50" width="116.50" height="13.65" fill="#3a3a3a"/>
<rect x="689.50" y="267.50" width="12.60" height="13.65" fill="#292929"/>
<clipPath id="t3"><rect x="689.5" y="267.50" width="12.6" height="13.65"/></clipPath>
<line x1="690.76" y1="279.62" x2="701.12" y2="269.70" stroke="#f07800" stroke-width="1.7" clip-path="url(#t3)"/>
<text x="704.20" y="276.10" font-size="6.0" fill="#ececec" stroke="#ececec" stroke-width="0.16" textLength="17.30" lengthAdjust="spacingAndGlyphs">(Curve)</text>
<rect x="784.20" y="271.80" width="5.0" height="5.0" rx="0.15" fill="none" stroke="#d8d8d8" stroke-width="0.7"/>
<path d="M785.10 274.40L786.30 275.80L788.95 272.20" fill="none" stroke="#ffffff" stroke-width="0.9" />
<rect x="674.90" y="281.80" width="116.50" height="13.65" fill="#3a3a3a"/>
<rect x="689.50" y="281.80" width="12.60" height="13.65" fill="#292929"/>
<clipPath id="t4"><rect x="689.5" y="281.80" width="12.6" height="13.65"/></clipPath>
<line x1="690.76" y1="285.24" x2="700.56" y2="292.37" stroke="#f07800" stroke-width="1.3" clip-path="url(#t4)"/>
<text x="704.20" y="290.40" font-size="6.0" fill="#ececec" stroke="#ececec" stroke-width="0.16" textLength="17.30" lengthAdjust="spacingAndGlyphs">(Curve)</text>
<rect x="784.20" y="286.10" width="5.0" height="5.0" rx="0.15" fill="none" stroke="#d8d8d8" stroke-width="0.7"/>
<path d="M785.10 288.70L786.30 290.10L788.95 286.50" fill="none" stroke="#ffffff" stroke-width="0.9" />
<rect x="674.90" y="296.10" width="116.50" height="13.65" fill="#3a3a3a"/>
<rect x="689.50" y="296.10" width="12.60" height="13.65" fill="#292929"/>
<clipPath id="t5"><rect x="689.5" y="296.10" width="12.6" height="13.65"/></clipPath>
<line x1="690.76" y1="301.40" x2="700.84" y2="304.81" stroke="#f07800" stroke-width="0.7" clip-path="url(#t5)"/>
<text x="704.20" y="304.70" font-size="6.0" fill="#ececec" stroke="#ececec" stroke-width="0.16" textLength="17.30" lengthAdjust="spacingAndGlyphs">(Curve)</text>
<rect x="784.20" y="300.40" width="5.0" height="5.0" rx="0.15" fill="none" stroke="#d8d8d8" stroke-width="0.7"/>
<path d="M785.10 303.00L786.30 304.40L788.95 300.80" fill="none" stroke="#ffffff" stroke-width="0.9" />
<rect x="674.90" y="310.40" width="116.50" height="13.65" fill="#3a3a3a"/>
<rect x="689.50" y="310.40" width="12.60" height="13.65" fill="#292929"/>
<clipPath id="t6"><rect x="689.5" y="310.40" width="12.6" height="13.65"/></clipPath>
<line x1="691.88" y1="322.83" x2="700.00" y2="311.98" stroke="#f07800" stroke-width="1.7" clip-path="url(#t6)"/>
<text x="704.20" y="319.00" font-size="6.0" fill="#ececec" stroke="#ececec" stroke-width="0.16" textLength="17.30" lengthAdjust="spacingAndGlyphs">(Curve)</text>
<rect x="784.20" y="314.70" width="5.0" height="5.0" rx="0.15" fill="none" stroke="#d8d8d8" stroke-width="0.7"/>
<path d="M785.10 317.30L786.30 318.70L788.95 315.10" fill="none" stroke="#ffffff" stroke-width="0.9" />
<rect x="674.90" y="324.70" width="116.50" height="13.65" fill="#3a3a3a"/>
<rect x="689.50" y="324.70" width="12.60" height="13.65" fill="#292929"/>
<clipPath id="t7"><rect x="689.5" y="324.70" width="12.6" height="13.65"/></clipPath>
<line x1="690.76" y1="331.55" x2="700.84" y2="331.55" stroke="#f07800" stroke-width="1.2" clip-path="url(#t7)"/>
<text x="704.20" y="333.30" font-size="6.0" fill="#ececec" stroke="#ececec" stroke-width="0.16" textLength="17.30" lengthAdjust="spacingAndGlyphs">(Curve)</text>
<rect x="784.20" y="329.00" width="5.0" height="5.0" rx="0.15" fill="none" stroke="#d8d8d8" stroke-width="0.7"/>
<path d="M785.10 331.60L786.30 333.00L788.95 329.40" fill="none" stroke="#ffffff" stroke-width="0.9" />
<rect x="674.90" y="339.00" width="116.50" height="13.65" fill="#3a3a3a"/>
<rect x="689.50" y="339.00" width="12.60" height="13.65" fill="#292929"/>
<clipPath id="t8"><rect x="689.5" y="339.00" width="12.6" height="13.65"/></clipPath>
<line x1="690.76" y1="347.09" x2="700.84" y2="344.61" stroke="#f07800" stroke-width="0.7" clip-path="url(#t8)"/>
<text x="704.20" y="347.60" font-size="6.0" fill="#ececec" stroke="#ececec" stroke-width="0.16" textLength="17.30" lengthAdjust="spacingAndGlyphs">(Curve)</text>
<rect x="784.20" y="343.30" width="5.0" height="5.0" rx="0.15" fill="none" stroke="#d8d8d8" stroke-width="0.7"/>
<path d="M785.10 345.90L786.30 347.30L788.95 343.70" fill="none" stroke="#ffffff" stroke-width="0.9" />
<rect x="674.90" y="353.30" width="116.50" height="13.65" fill="#5b8dd6"/>
<rect x="689.50" y="353.30" width="12.60" height="13.65" fill="#292929"/>
<rect x="689.7" y="353.50" width="12.2" height="13.25" fill="none" stroke="#1e3a66" stroke-width="0.5"/>
<clipPath id="t9"><rect x="689.5" y="353.30" width="12.6" height="13.65"/></clipPath>
<line x1="693.00" y1="365.73" x2="698.04" y2="354.88" stroke="#f07800" stroke-width="1.7" clip-path="url(#t9)"/>
<text x="704.20" y="361.90" font-size="6.0" fill="#ffffff" stroke="#ffffff" stroke-width="0.16" textLength="17.30" lengthAdjust="spacingAndGlyphs">(Curve)</text>
<rect x="784.20" y="357.60" width="5.0" height="5.0" rx="0.15" fill="none" stroke="#a4c0ea" stroke-width="0.7"/>
<path d="M785.10 360.20L786.30 361.60L788.95 358.00" fill="none" stroke="#c4d8f4" stroke-width="0.9" />
<rect x="674.90" y="367.60" width="116.50" height="13.65" fill="#3a3a3a"/>
<rect x="689.50" y="367.60" width="12.60" height="13.65" fill="#292929"/>
<clipPath id="t10"><rect x="689.5" y="367.60" width="12.6" height="13.65"/></clipPath>
<line x1="693.00" y1="381.89" x2="697.48" y2="369.49" stroke="#f07800" stroke-width="2.0" clip-path="url(#t10)"/>
<text x="704.20" y="376.20" font-size="6.0" fill="#ececec" stroke="#ececec" stroke-width="0.16" textLength="17.30" lengthAdjust="spacingAndGlyphs">(Curve)</text>
<rect x="784.20" y="371.90" width="5.0" height="5.0" rx="0.15" fill="none" stroke="#d8d8d8" stroke-width="0.7"/>
<path d="M785.10 374.50L786.30 375.90L788.95 372.30" fill="none" stroke="#ffffff" stroke-width="0.9" />
</g>
<rect x="674.60" y="374.90" width="125.40" height="9.70" fill="#3a3a3a"/>
<rect x="677.50" y="375.60" width="9.20" height="8.10" fill="#4c4c4c"/>
<path d="M679.4 377.9L682.1 376.8L684.8 377.9L682.1 379.0Z" fill="none" stroke="#e0e0e0" stroke-width="0.5" />
<path d="M679.4 379.4L682.1 378.3L684.8 379.4L682.1 380.5Z" fill="none" stroke="#e0e0e0" stroke-width="0.5" />
<path d="M679.4 380.9L682.1 379.8L684.8 380.9L682.1 382.0Z" fill="none" stroke="#e0e0e0" stroke-width="0.5" />
<rect x="720.20" y="377.00" width="6.60" height="5.60" fill="#e4e4e4" rx="0.5"/>
<circle cx="723.50" cy="379.80" r="1.80" fill="#3a3a3a"/>
<circle cx="733.50" cy="379.80" r="2.70" fill="#4a4a4a" stroke="#dcdcdc" stroke-width="0.7"/>
<path d="M733.5 377.1A2.7 2.7 0 0 0 733.5 382.5Z" fill="#e4e4e4" />
<text x="741.0" y="381.70" font-size="6.4" font-style="italic" fill="#dcdcdc" font-family="'Liberation Serif', serif">fx</text>
<path d="M770.5 376.8L773.2 376.8L774.7 378.3L774.7 382.7L770.5 382.7Z" fill="none" stroke="#d0d0d0" stroke-width="0.7" />
<rect x="779.90" y="376.80" width="5.00" height="1.50" fill="#9a9a9a"/>
<rect x="779.90" y="378.90" width="5.00" height="1.50" fill="#9a9a9a"/>
<rect x="779.90" y="381.00" width="5.00" height="1.50" fill="#9a9a9a"/>
<path d="M790.9 378.1L794.9 378.1L794.5 382.8L791.3 382.8Z" fill="#8e8e8e" />
<rect x="790.50" y="377.00" width="4.80" height="0.80" fill="#8e8e8e"/>
<rect x="792.00" y="376.30" width="1.80" height="0.80" fill="#8e8e8e"/>
<rect x="674.60" y="385.50" width="125.40" height="10.00" fill="#272727"/>
<rect x="678.60" y="388.40" width="0.70" height="0.70" fill="#5a5a5a"/>
<rect x="679.90" y="388.40" width="0.70" height="0.70" fill="#5a5a5a"/>
<rect x="678.60" y="389.80" width="0.70" height="0.70" fill="#5a5a5a"/>
<rect x="679.90" y="389.80" width="0.70" height="0.70" fill="#5a5a5a"/>
<rect x="678.60" y="391.20" width="0.70" height="0.70" fill="#5a5a5a"/>
<rect x="679.90" y="391.20" width="0.70" height="0.70" fill="#5a5a5a"/>
<rect x="678.60" y="392.60" width="0.70" height="0.70" fill="#5a5a5a"/>
<rect x="679.90" y="392.60" width="0.70" height="0.70" fill="#5a5a5a"/>
<rect x="683.70" y="385.50" width="26.30" height="10.10" fill="#3e3e3e"/>
<text x="686.00" y="392.10" font-size="6.0" fill="#ffffff" stroke="#ffffff" stroke-width="0.16" textLength="21.70" lengthAdjust="spacingAndGlyphs">Transform</text>
<text x="712.30" y="392.10" font-size="6.0" fill="#c4c4c4" stroke="#c4c4c4" stroke-width="0.16" textLength="16.20" lengthAdjust="spacingAndGlyphs">History</text>
<text x="732.90" y="392.10" font-size="6.0" fill="#c4c4c4" stroke="#c4c4c4" stroke-width="0.16" textLength="21.60" lengthAdjust="spacingAndGlyphs">Navigator</text>
<rect x="674.60" y="395.50" width="125.40" height="47.70" fill="#404040"/>
<g transform="translate(693.3 413.9) rotate(27)">
<rect x="-6.60" y="-6.60" width="13.20" height="13.20" fill="#6e6e6e"/>
<circle cx="-7.00" cy="-7.00" r="1.40" fill="#d4d4d4"/>
<circle cx="-7.00" cy="0.00" r="1.40" fill="#d4d4d4"/>
<circle cx="-7.00" cy="7.00" r="1.40" fill="#d4d4d4"/>
<circle cx="0.00" cy="-7.00" r="1.40" fill="#d4d4d4"/>
<circle cx="0.00" cy="0.00" r="1.40" fill="#d4d4d4"/>
<circle cx="0.00" cy="7.00" r="1.40" fill="#d4d4d4"/>
<circle cx="7.00" cy="-7.00" r="1.40" fill="#d4d4d4"/>
<circle cx="7.00" cy="0.00" r="1.40" fill="#d4d4d4"/>
<rect x="5.00" y="5.00" width="4.00" height="4.00" fill="#ffffff"/>
</g>
<text x="711.30" y="407.90" font-size="6.0" fill="#e8e8e8" stroke="#e8e8e8" stroke-width="0.16" textLength="3.60" lengthAdjust="spacingAndGlyphs">X:</text>
<rect x="717.40" y="401.60" width="29.20" height="8.40" fill="#2a2a2a"/>
<text x="720.00" y="408.00" font-size="6.0" fill="#f0f0f0" stroke="#f0f0f0" stroke-width="0.16" textLength="14.30" lengthAdjust="spacingAndGlyphs">155 pt</text>
<text x="751.90" y="407.90" font-size="6.0" fill="#e8e8e8" stroke="#e8e8e8" stroke-width="0.16" textLength="6.10" lengthAdjust="spacingAndGlyphs">W:</text>
<rect x="760.10" y="401.60" width="29.50" height="8.40" fill="#2a2a2a"/>
<text x="762.40" y="408.00" font-size="6.0" fill="#f0f0f0" stroke="#f0f0f0" stroke-width="0.16" textLength="13.00" lengthAdjust="spacingAndGlyphs">8.7 pt</text>
<text x="711.30" y="418.80" font-size="6.0" fill="#e8e8e8" stroke="#e8e8e8" stroke-width="0.16" textLength="3.60" lengthAdjust="spacingAndGlyphs">Y:</text>
<rect x="717.40" y="412.70" width="29.20" height="8.30" fill="#2a2a2a"/>
<text x="720.00" y="418.90" font-size="6.0" fill="#f0f0f0" stroke="#f0f0f0" stroke-width="0.16" textLength="18.10" lengthAdjust="spacingAndGlyphs">219.4 pt</text>
<text x="751.90" y="418.80" font-size="6.0" fill="#e8e8e8" stroke="#e8e8e8" stroke-width="0.16" textLength="6.10" lengthAdjust="spacingAndGlyphs">H:</text>
<rect x="760.10" y="412.70" width="29.50" height="8.30" fill="#2a2a2a"/>
<text x="762.40" y="418.90" font-size="6.0" fill="#f0f0f0" stroke="#f0f0f0" stroke-width="0.16" textLength="16.20" lengthAdjust="spacingAndGlyphs">36.3 pt</text>
<text x="711.30" y="432.50" font-size="6.0" fill="#e8e8e8" stroke="#e8e8e8" stroke-width="0.16" textLength="3.60" lengthAdjust="spacingAndGlyphs">R:</text>
<rect x="717.40" y="426.60" width="29.20" height="8.20" fill="#2a2a2a"/>
<text x="720.00" y="432.60" font-size="6.0" fill="#f0f0f0" stroke="#f0f0f0" stroke-width="0.16" textLength="11.60" lengthAdjust="spacingAndGlyphs">155 °</text>
<text x="754.50" y="432.50" font-size="6.0" fill="#e8e8e8" stroke="#e8e8e8" stroke-width="0.16" textLength="3.50" lengthAdjust="spacingAndGlyphs">S:</text>
<rect x="760.10" y="426.60" width="29.50" height="8.20" fill="#2a2a2a"/>
<text x="762.40" y="432.60" font-size="6.0" fill="#f0f0f0" stroke="#f0f0f0" stroke-width="0.16" textLength="6.50" lengthAdjust="spacingAndGlyphs">0 °</text>
<path d="M742.90 430.19L745.10 430.19L744.00 431.62Z" fill="#d8d8d8" />
<path d="M785.40 430.19L787.60 430.19L786.50 431.62Z" fill="#d8d8d8" />
<rect x="793.40" y="407.80" width="1.50" height="7.00" fill="#6a6a6a"/>
</svg>
</body></html>
